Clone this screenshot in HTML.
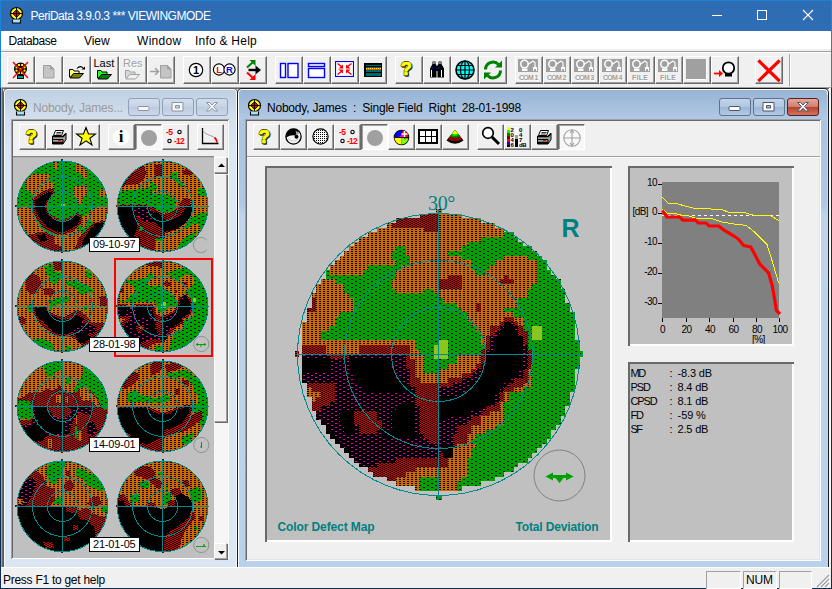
<!DOCTYPE html><html><head><meta charset="utf-8"><title>PeriData</title><style>
html,body{margin:0;padding:0}
body{width:832px;height:589px;position:relative;overflow:hidden;background:#f0f0f0;font-family:"Liberation Sans",sans-serif}
body>div,body>span,body>svg{position:absolute;display:block;white-space:pre}
.b{border:1px solid;border-color:#fff #696969 #696969 #fff;background:#f0f0f0;box-shadow:inset -1px -1px 0 #a0a0a0}
.sb{border:1px solid;border-color:#fff #a0a0a0 #a0a0a0 #fff;background:#f0f0f0;box-shadow:1px 1px 0 #696969}
.bp{border:1px solid;border-color:#696969 #fff #fff #696969;background:#f8f8f8;box-shadow:inset 1px 1px 0 #a0a0a0}
</style></head><body><div style="left:0px;top:0px;width:832px;height:31px;background:#2e6db3;"></div>
<div style="left:0px;top:0px;width:832px;height:1px;background:#1c82d4;"></div>
<div style="left:0px;top:0px;width:1px;height:88px;background:#1c82d4;"></div>
<div style="left:831px;top:0px;width:1px;height:88px;background:#1c82d4;"></div>
<div style="left:0px;top:88px;width:1px;height:501px;background:#0c2d55;"></div>
<div style="left:831px;top:88px;width:1px;height:501px;background:#0c2d55;"></div>
<span style="left:30.5px;top:7.5px;font:normal 12px 'Liberation Sans',sans-serif;line-height:16px;color:#fff;letter-spacing:-0.481px;">PeriData 3.9.0.3 *** VIEWINGMODE</span>
<div style="left:712px;top:15px;width:10px;height:1px;background:#fff;"></div>
<div style="left:757px;top:10px;width:8px;height:8px;border:1px solid #fff"></div>
<svg style="left:802px;top:9px" width="12" height="12" viewBox="0 0 12 12"><path d="M1 1L11 11M11 1L1 11" stroke="#fff" stroke-width="1.1" fill="none"/></svg>
<div style="left:1px;top:31px;width:830px;height:18px;background:#fff;"></div>
<div style="left:1px;top:49px;width:830px;height:2px;background:#f0f0f0;"></div>
<div style="left:1px;top:51px;width:830px;height:1px;background:#a0a0a0;"></div>
<div style="left:1px;top:52px;width:830px;height:1px;background:#fff;"></div>
<span style="left:8.5px;top:33px;font:normal 12px 'Liberation Sans',sans-serif;line-height:16px;color:#000;letter-spacing:-0.422px;">Database</span>
<span style="left:84px;top:33px;font:normal 12px 'Liberation Sans',sans-serif;line-height:16px;color:#000;letter-spacing:-0.074px;">View</span>
<span style="left:137px;top:33px;font:normal 12px 'Liberation Sans',sans-serif;line-height:16px;color:#000;letter-spacing:0.302px;">Window</span>
<span style="left:195px;top:33px;font:normal 12px 'Liberation Sans',sans-serif;line-height:16px;color:#000;letter-spacing:0.239px;">Info &amp; Help</span>
<div style="left:1px;top:53px;width:830px;height:35px;background:#f0f0f0;"></div>
<div class="b" style="left:7px;top:56px;width:26px;height:26px"></div>
<div class="b" style="left:35px;top:56px;width:26px;height:26px"></div>
<div class="b" style="left:63px;top:56px;width:26px;height:26px"></div>
<div class="b" style="left:91px;top:56px;width:26px;height:26px"></div>
<div class="b" style="left:119px;top:56px;width:26px;height:26px"></div>
<div class="b" style="left:147px;top:56px;width:26px;height:26px"></div>
<div class="b" style="left:183px;top:56px;width:26px;height:26px"></div>
<div class="b" style="left:211px;top:56px;width:26px;height:26px"></div>
<div class="b" style="left:239px;top:56px;width:26px;height:26px"></div>
<div class="b" style="left:275px;top:56px;width:26px;height:26px"></div>
<div class="b" style="left:303px;top:56px;width:26px;height:26px"></div>
<div class="b" style="left:331px;top:56px;width:26px;height:26px"></div>
<div class="b" style="left:359px;top:56px;width:26px;height:26px"></div>
<div class="b" style="left:395px;top:56px;width:26px;height:26px"></div>
<div class="b" style="left:423px;top:56px;width:26px;height:26px"></div>
<div class="b" style="left:451px;top:56px;width:26px;height:26px"></div>
<div class="b" style="left:479px;top:56px;width:26px;height:26px"></div>
<div class="b" style="left:515px;top:56px;width:26px;height:26px"></div>
<div class="b" style="left:543px;top:56px;width:26px;height:26px"></div>
<div class="b" style="left:571px;top:56px;width:26px;height:26px"></div>
<div class="b" style="left:599px;top:56px;width:26px;height:26px"></div>
<div class="b" style="left:627px;top:56px;width:26px;height:26px"></div>
<div class="b" style="left:655px;top:56px;width:26px;height:26px"></div>
<div class="b" style="left:683px;top:56px;width:26px;height:26px"></div>
<div class="b" style="left:711px;top:56px;width:26px;height:26px"></div>
<div class="b" style="left:755px;top:56px;width:26px;height:26px"></div>
<div style="left:789px;top:54px;width:1px;height:32px;background:#a0a0a0;"></div>
<div style="left:790px;top:54px;width:1px;height:32px;background:#fff;"></div>
<div style="left:1px;top:87px;width:830px;height:1px;background:#a0a0a0;"></div>
<div style="left:1px;top:88px;width:830px;height:1px;background:#696969;"></div>
<div style="left:1px;top:89px;width:830px;height:479px;background:#f0f0f0;"></div>
<div style="left:1px;top:88px;width:1px;height:480px;background:#a0a0a0;"></div>
<div style="left:2px;top:88px;width:1px;height:480px;background:#696969;"></div>
<div style="left:829px;top:88px;width:2px;height:480px;background:#f8f8f8;"></div>
<div style="left:3px;top:88px;width:235px;height:480px;background:#5a5a5a;border-radius:5px 5px 0 0"></div>
<div style="left:4px;top:89px;width:233px;height:479px;background:#f4f8fc;border-radius:4px 4px 0 0"></div>
<div style="left:5px;top:90px;width:231px;height:478px;background:linear-gradient(#c0d0e3 0px,#d2dfee 30px,#dae6f4 60px,#dae6f4 100%);border-radius:3px 3px 0 0"></div>
<div style="left:237px;top:88px;width:592px;height:480px;background:#1a1a1a;border-radius:5px 5px 0 0"></div>
<div style="left:238px;top:89px;width:590px;height:479px;background:#fff;border-radius:4px 4px 0 0"></div>
<div style="left:239px;top:90px;width:588px;height:478px;background:linear-gradient(#98b4d4 0px,#b1c9e5 30px,#a9c3e0 31px,#afc8e4 115px,#bdd4ec 125px,#b9d1ea 100%);border-radius:3px 3px 0 0"></div>
<div style="left:827px;top:95px;width:1px;height:473px;background:#a0e8f8;"></div>
<span style="left:33px;top:100px;font:normal 12px 'Liberation Sans',sans-serif;line-height:16px;color:#9a9a9a;letter-spacing:-0.155px;">Nobody, James...</span>
<span style="left:267px;top:100px;font:normal 12px 'Liberation Sans',sans-serif;line-height:16px;color:#000;letter-spacing:-0.216px;">Nobody, James  :  Single Field  Right  28-01-1998</span>
<div style="left:128px;top:98px;width:30px;height:16px;border:1px solid #8f9fbc;border-radius:3px;background:linear-gradient(#d3deec,#c6d3e4 50%,#bccbdf 50%,#cbd8e8)"></div>
<div style="left:162px;top:98px;width:30px;height:16px;border:1px solid #8f9fbc;border-radius:3px;background:linear-gradient(#d3deec,#c6d3e4 50%,#bccbdf 50%,#cbd8e8)"></div>
<div style="left:196px;top:98px;width:30px;height:16px;border:1px solid #8f9fbc;border-radius:3px;background:linear-gradient(#d3deec,#c6d3e4 50%,#bccbdf 50%,#cbd8e8)"></div>
<div style="left:719px;top:98px;width:30px;height:16px;border:1px solid #5f7290;border-radius:3px;background:linear-gradient(#c4d5ea,#b0c6e0 50%,#9bb6d6 50%,#b3cae4)"></div>
<div style="left:753px;top:98px;width:30px;height:16px;border:1px solid #5f7290;border-radius:3px;background:linear-gradient(#c4d5ea,#b0c6e0 50%,#9bb6d6 50%,#b3cae4)"></div>
<div style="left:787px;top:98px;width:30px;height:16px;border:1px solid #5a1f1c;border-radius:3px;background:linear-gradient(#e3a79b,#d07d6f 50%,#b9402c 50%,#d0735f)"></div>
<svg style="left:137px;top:105px" width="13" height="7" viewBox="0 0 13 7"><rect x="1" y="1.500" width="11" height="4" rx="1" fill="#f4f6fa" stroke="#8a94a6" stroke-width="1"/></svg>
<svg style="left:171px;top:101px" width="13" height="11" viewBox="0 0 13 11"><path fill-rule="evenodd" d="M1 1.500h11v8.500h-11zM4.500 4.500v2.500h4v-2.500z" fill="#f4f6fa" stroke="#8a94a6" stroke-width="1"/></svg>
<svg style="left:205px;top:101px" width="14" height="11" viewBox="0 0 14 11"><path d="M1.500 1.500h3l2.500 2.500 2.500-2.500h3l-4 4 4 4.500h-3l-2.500-2.800-2.500 2.800h-3l4-4.500z" fill="#f4f6fa" stroke="#8a94a6" stroke-width="1" stroke-linejoin="round"/></svg>
<svg style="left:728px;top:105px" width="13" height="7" viewBox="0 0 13 7"><rect x="1" y="1.500" width="11" height="4" rx="1" fill="#ffffff" stroke="#4a5568" stroke-width="1"/></svg>
<svg style="left:762px;top:101px" width="13" height="11" viewBox="0 0 13 11"><path fill-rule="evenodd" d="M1 1.500h11v8.500h-11zM4.500 4.500v2.500h4v-2.500z" fill="#ffffff" stroke="#4a5568" stroke-width="1"/></svg>
<svg style="left:796px;top:101px" width="14" height="11" viewBox="0 0 14 11"><path d="M1.500 1.500h3l2.500 2.500 2.500-2.500h3l-4 4 4 4.500h-3l-2.500-2.800-2.500 2.800h-3l4-4.500z" fill="#ffffff" stroke="#4a5568" stroke-width="1" stroke-linejoin="round"/></svg>
<div style="left:11px;top:119px;width:218px;height:440px;background:#a0a0a0;"></div>
<div style="left:12px;top:120px;width:217px;height:439px;background:#fff;"></div>
<div style="left:12px;top:120px;width:216px;height:438px;background:#696969;"></div>
<div style="left:13px;top:121px;width:215px;height:437px;background:#e3e3e3;"></div>
<div style="left:13px;top:121px;width:214px;height:436px;background:#f0f0f0;"></div>
<div style="left:245px;top:119px;width:576px;height:442px;background:#a0a0a0;"></div>
<div style="left:246px;top:120px;width:575px;height:441px;background:#fff;"></div>
<div style="left:246px;top:120px;width:574px;height:440px;background:#696969;"></div>
<div style="left:247px;top:121px;width:573px;height:439px;background:#e3e3e3;"></div>
<div style="left:247px;top:121px;width:572px;height:438px;background:#f0f0f0;"></div>
<div class="b" style="left:19px;top:124px;width:25px;height:24px"></div>
<div class="b" style="left:46px;top:124px;width:25px;height:24px"></div>
<div class="b" style="left:73px;top:124px;width:25px;height:24px"></div>
<div class="b" style="left:108px;top:124px;width:25px;height:24px"></div>
<div class="b" style="left:162px;top:124px;width:25px;height:24px"></div>
<div class="b" style="left:197px;top:124px;width:25px;height:24px"></div>
<div class="bp" style="left:135px;top:124px;width:25px;height:24px"></div>
<div class="b" style="left:253px;top:124px;width:25px;height:24px"></div>
<div class="b" style="left:280px;top:124px;width:25px;height:24px"></div>
<div class="b" style="left:307px;top:124px;width:25px;height:24px"></div>
<div class="b" style="left:334px;top:124px;width:25px;height:24px"></div>
<div class="b" style="left:388px;top:124px;width:25px;height:24px"></div>
<div class="b" style="left:415px;top:124px;width:25px;height:24px"></div>
<div class="b" style="left:442px;top:124px;width:25px;height:24px"></div>
<div class="b" style="left:477px;top:124px;width:25px;height:24px"></div>
<div class="b" style="left:504px;top:124px;width:25px;height:24px"></div>
<div class="b" style="left:531px;top:124px;width:25px;height:24px"></div>
<div class="bp" style="left:361px;top:124px;width:25px;height:24px"></div>
<div class="bp" style="left:558px;top:124px;width:25px;height:24px"></div>
<div style="left:247px;top:156px;width:573px;height:1px;background:#a0a0a0;"></div>
<div style="left:247px;top:157px;width:573px;height:1px;background:#fff;"></div>
<div style="left:13px;top:156px;width:201px;height:402px;background:#c0c0c0;"></div>
<div style="left:13px;top:156px;width:201px;height:1px;background:#868686;"></div>
<div style="left:13px;top:157px;width:201px;height:1px;background:#b0b0b0;"></div>
<div style="left:214px;top:156px;width:14px;height:402px;background:#f0f0f0;"></div>
<div style="left:265px;top:166px;width:347px;height:376px;background:#696969;"></div>
<div style="left:267px;top:168px;width:345px;height:374px;background:#fff;"></div>
<div style="left:267px;top:168px;width:343px;height:372px;background:#c0c0c0;"></div>
<div style="left:628px;top:166px;width:166px;height:180px;background:#696969;"></div>
<div style="left:630px;top:168px;width:164px;height:178px;background:#fff;"></div>
<div style="left:630px;top:168px;width:162px;height:176px;background:#c0c0c0;"></div>
<div style="left:628px;top:362px;width:166px;height:180px;background:#696969;"></div>
<div style="left:630px;top:364px;width:164px;height:178px;background:#fff;"></div>
<div style="left:630px;top:364px;width:162px;height:176px;background:#c0c0c0;"></div>
<div style="left:1px;top:568px;width:830px;height:20px;background:#f0f0f0;"></div>
<div style="left:1px;top:567px;width:830px;height:1px;background:#fff;"></div>
<div style="left:0px;top:588px;width:832px;height:1px;background:#0c2d55;"></div>
<span style="left:3px;top:571.5px;font:normal 12px 'Liberation Sans',sans-serif;line-height:16px;color:#000;letter-spacing:-0.270px;">Press F1 to get help</span>
<div style="left:706px;top:571px;width:33px;height:16px;border:1px solid;border-color:#a0a0a0 #fff #fff #a0a0a0"></div>
<div style="left:743px;top:571px;width:32px;height:16px;border:1px solid;border-color:#a0a0a0 #fff #fff #a0a0a0"></div>
<div style="left:779px;top:571px;width:31px;height:16px;border:1px solid;border-color:#a0a0a0 #fff #fff #a0a0a0"></div>
<svg style="left:815px;top:573px" width="15" height="15" viewBox="0 0 15 15"><path d="M14 2L2 14M14 6L6 14M14 10L10 14" stroke="#a0a0a0" stroke-width="1.300"/><path d="M15 3L3 15M15 7L7 15M15 11L11 15" stroke="#fff" stroke-width="1"/></svg>
<span style="left:746px;top:571.5px;font:normal 12px 'Liberation Sans',sans-serif;line-height:16px;color:#000;letter-spacing:-0.109px;">NUM</span>
<svg width="0" height="0" style="position:absolute"><defs>
<pattern id="pg" width="8" height="4" patternUnits="userSpaceOnUse"><rect width="8" height="4" fill="#00a000"/><rect x="1" y="0" width="2" height="1" fill="#000"/><rect x="5" y="2" width="2" height="1" fill="#000"/></pattern>
<pattern id="po" width="4" height="2" patternUnits="userSpaceOnUse"><rect width="4" height="2" fill="#d06800"/><rect x="1" y="0" width="2" height="1" fill="#000"/></pattern>
<pattern id="pr" width="4" height="2" patternUnits="userSpaceOnUse"><rect width="4" height="2" fill="#000"/><rect x="1" y="1" width="2" height="1" fill="#e00000"/><rect x="3" y="0" width="1" height="1" fill="#e00000"/><rect x="0" y="0" width="1" height="1" fill="#e00000"/></pattern>
<pattern id="pm" width="8" height="4" patternUnits="userSpaceOnUse"><rect width="8" height="4" fill="#000"/><rect x="1" y="0" width="2" height="1" fill="#e000a8"/><rect x="5" y="2" width="2" height="1" fill="#e000a8"/></pattern>
<pattern id="pl" width="8" height="4" patternUnits="userSpaceOnUse"><rect width="8" height="4" fill="#8cc420"/></pattern>
</defs></svg>
<svg style="left:290px;top:205px" width="300" height="296" viewBox="0 0 300 296" shape-rendering="crispEdges"><path d="M148 9h24v4h-24zM148 13h43v5h-43zM97 18h5v5h-5zM148 18h57v5h-57zM87 23h47v4h-47zM148 23h66v4h-66zM78 27h136v5h-136zM69 32h122v5h-122zM64 37h113v4h-113zM59 41h47v5h-47zM116 41h56v5h-56zM54 46h48v5h-48zM116 46h42v5h-42zM50 51h52v4h-52zM120 51h52v4h-52zM214 51h24v4h-24zM45 55h61v5h-61zM120 55h61v5h-61zM205 55h42v5h-42zM40 60h38v5h-38zM111 60h70v5h-70zM200 60h47v5h-47zM40 65h33v5h-33zM106 65h80v5h-80zM196 65h51v5h-51zM106 70h52v4h-52zM172 70h42v4h-42zM219 70h28v4h-28zM31 74h14v5h-14zM102 74h46v5h-46zM172 74h38v5h-38zM224 74h23v5h-23zM26 79h28v5h-28zM102 79h46v5h-46zM172 79h70v5h-70zM26 84h28v4h-28zM106 84h28v4h-28zM144 84h94v4h-94zM22 88h37v5h-37zM148 88h90v5h-90zM26 93h38v5h-38zM153 93h75v5h-75zM26 98h38v5h-38zM167 98h19v5h-19zM191 98h37v5h-37zM26 103h38v4h-38zM172 103h14v4h-14zM191 103h23v4h-23zM17 107h33v5h-33zM177 107h47v5h-47zM17 112h28v5h-28zM177 112h37v5h-37zM224 112h9v5h-9zM12 117h33v4h-33zM181 117h29v4h-29zM228 117h5v4h-5zM12 121h28v5h-28zM186 121h14v5h-14zM12 126h19v5h-19zM191 126h9v5h-9zM12 131h19v4h-19zM191 131h5v4h-5zM12 135h113v5h-113zM191 135h5v5h-5zM36 140h33v5h-33zM120 140h5v5h-5zM36 145h33v4h-33zM120 145h10v4h-10zM120 149h14v5h-14zM167 149h24v5h-24zM125 154h9v5h-9zM167 154h24v5h-24zM125 159h9v5h-9zM158 159h28v5h-28zM125 164h9v4h-9zM148 164h33v4h-33zM238 164h4v4h-4zM125 168h47v5h-47zM238 168h4v5h-4zM130 173h28v5h-28zM238 173h4v5h-4zM233 178h9v4h-9zM17 182h5v5h-5zM224 182h9v5h-9zM17 187h14v5h-14zM214 187h5v5h-5zM22 192h4v5h-4zM214 192h5v5h-5zM210 197h4v4h-4zM210 201h4v5h-4zM200 206h14v5h-14zM191 211h23v4h-23zM191 215h23v5h-23zM181 220h24v5h-24zM181 225h15v4h-15zM177 229h9v5h-9zM177 234h4v5h-4zM167 239h19v4h-19zM163 243h18v5h-18zM163 248h18v5h-18zM158 253h19v5h-19zM158 258h19v4h-19zM125 262h52v5h-52zM116 267h61v5h-61zM106 272h24v4h-24zM148 272h24v4h-24zM106 276h24v5h-24zM148 276h19v5h-19zM125 281h5v5h-5zM148 281h19v5h-19z" fill="url(#po)"/><path d="M214 27h10v5h-10zM191 32h37v5h-37zM177 37h56v4h-56zM106 41h10v5h-10zM172 41h70v5h-70zM102 46h14v5h-14zM158 46h89v5h-89zM102 51h18v4h-18zM172 51h42v4h-42zM238 51h14v4h-14zM106 55h14v5h-14zM181 55h24v5h-24zM247 55h10v5h-10zM78 60h33v5h-33zM181 60h19v5h-19zM247 60h10v5h-10zM36 65h4v5h-4zM73 65h33v5h-33zM186 65h10v5h-10zM247 65h14v5h-14zM36 70h70v4h-70zM247 70h19v4h-19zM45 74h57v5h-57zM247 74h24v5h-24zM54 79h48v5h-48zM242 79h29v5h-29zM54 84h52v4h-52zM134 84h10v4h-10zM238 84h37v4h-37zM59 88h89v5h-89zM238 88h37v5h-37zM64 93h89v5h-89zM228 93h47v5h-47zM64 98h103v5h-103zM228 98h52v5h-52zM64 103h108v4h-108zM214 103h66v4h-66zM50 107h127v5h-127zM224 107h61v5h-61zM45 112h132v5h-132zM233 112h52v5h-52zM45 117h136v4h-136zM233 117h52v4h-52zM40 121h146v5h-146zM233 121h9v5h-9zM252 121h33v5h-33zM31 126h160v5h-160zM238 126h4v5h-4zM252 126h33v5h-33zM31 131h160v4h-160zM238 131h4v4h-4zM252 131h33v4h-33zM125 135h23v5h-23zM158 135h33v5h-33zM238 135h52v5h-52zM125 140h19v5h-19zM158 140h38v5h-38zM238 140h52v5h-52zM130 145h14v4h-14zM158 145h33v4h-33zM242 145h48v4h-48zM134 149h10v5h-10zM158 149h9v5h-9zM242 149h48v5h-48zM134 154h33v5h-33zM242 154h48v5h-48zM134 159h24v5h-24zM242 159h48v5h-48zM134 164h14v4h-14zM242 164h43v4h-43zM242 168h43v5h-43zM242 173h43v5h-43zM242 178h43v4h-43zM233 182h52v5h-52zM219 187h61v5h-61zM219 192h61v5h-61zM214 197h66v4h-66zM214 201h61v5h-61zM214 206h61v5h-61zM214 211h57v4h-57zM214 215h57v5h-57zM205 220h61v5h-61zM196 225h65v4h-65zM186 229h75v5h-75zM181 234h76v5h-76zM186 239h66v4h-66zM181 243h66v5h-66zM181 248h61v5h-61zM177 253h61v5h-61zM177 258h51v4h-51zM177 262h47v5h-47zM177 267h37v5h-37zM130 272h18v4h-18zM172 272h33v4h-33zM130 276h18v5h-18zM167 276h24v5h-24zM130 281h18v5h-18zM167 281h5v5h-5z" fill="url(#pg)"/><path d="M130 9h18v4h-18zM106 13h42v5h-42zM102 18h46v5h-46zM134 23h14v4h-14zM158 70h14v4h-14zM214 70h5v4h-5zM148 74h24v5h-24zM210 74h14v5h-14zM148 79h24v5h-24zM22 93h4v5h-4zM22 98h4v5h-4zM186 98h5v5h-5zM17 103h9v4h-9zM186 103h5v4h-5zM214 112h10v5h-10zM210 117h4v4h-4zM224 117h4v4h-4zM200 121h10v5h-10zM228 121h5v5h-5zM200 126h5v5h-5zM228 126h10v5h-10zM196 131h4v4h-4zM233 131h5v4h-5zM196 135h4v5h-4zM233 135h5v5h-5zM12 140h24v5h-24zM69 140h51v5h-51zM196 140h4v5h-4zM12 145h24v4h-24zM69 145h51v4h-51zM191 145h5v4h-5zM238 145h4v4h-4zM40 149h19v5h-19zM116 149h4v5h-4zM191 149h5v5h-5zM238 149h4v5h-4zM116 154h9v5h-9zM191 154h5v5h-5zM238 154h4v5h-4zM116 159h9v5h-9zM186 159h5v5h-5zM238 159h4v5h-4zM120 164h5v4h-5zM181 164h5v4h-5zM233 164h5v4h-5zM120 168h5v5h-5zM172 168h9v5h-9zM233 168h5v5h-5zM120 173h10v5h-10zM158 173h14v5h-14zM224 173h14v5h-14zM17 178h28v4h-28zM120 178h43v4h-43zM219 178h14v4h-14zM22 182h23v5h-23zM125 182h23v5h-23zM214 182h10v5h-10zM31 187h14v5h-14zM125 187h23v5h-23zM210 187h4v5h-4zM26 192h19v5h-19zM125 192h23v5h-23zM210 192h4v5h-4zM22 197h18v4h-18zM125 197h23v4h-23zM205 197h5v4h-5zM22 201h9v5h-9zM130 201h18v5h-18zM196 201h14v5h-14zM64 206h23v5h-23zM130 206h18v5h-18zM191 206h9v5h-9zM64 211h23v4h-23zM130 211h18v4h-18zM181 211h10v4h-10zM64 215h28v5h-28zM130 215h18v5h-18zM177 215h14v5h-14zM69 220h23v5h-23zM130 220h18v5h-18zM167 220h14v5h-14zM69 225h18v4h-18zM130 225h18v4h-18zM167 225h14v4h-14zM134 229h14v5h-14zM163 229h14v5h-14zM139 234h9v5h-9zM163 234h14v5h-14zM163 239h4v4h-4zM148 248h5v5h-5zM106 253h52v5h-52zM87 258h71v4h-71zM78 262h47v5h-47zM83 267h33v5h-33zM97 272h9v4h-9z" fill="url(#pr)"/><path d="M219 117h5v4h-5zM210 121h4v5h-4zM224 121h4v5h-4zM205 126h5v5h-5zM200 131h5v4h-5zM200 135h5v5h-5zM200 140h5v5h-5zM233 140h5v5h-5zM196 145h4v4h-4zM233 145h5v4h-5zM12 149h28v5h-28zM59 149h57v5h-57zM233 149h5v5h-5zM40 154h19v5h-19zM102 154h14v5h-14zM233 154h5v5h-5zM40 159h19v5h-19zM102 159h14v5h-14zM191 159h5v5h-5zM233 159h5v5h-5zM40 164h19v4h-19zM106 164h14v4h-14zM186 164h5v4h-5zM228 164h5v4h-5zM12 168h52v5h-52zM106 168h14v5h-14zM181 168h10v5h-10zM228 168h5v5h-5zM12 173h52v5h-52zM111 173h9v5h-9zM172 173h14v5h-14zM219 173h5v5h-5zM45 178h24v4h-24zM116 178h4v4h-4zM163 178h18v4h-18zM214 178h5v4h-5zM45 182h28v5h-28zM120 182h5v5h-5zM148 182h29v5h-29zM210 182h4v5h-4zM45 187h80v5h-80zM148 187h19v5h-19zM205 187h5v5h-5zM45 192h80v5h-80zM205 192h5v5h-5zM40 197h71v4h-71zM200 197h5v4h-5zM31 201h75v5h-75zM125 201h5v5h-5zM191 201h5v5h-5zM26 206h24v5h-24zM87 206h15v5h-15zM125 206h5v5h-5zM181 206h10v5h-10zM26 211h24v4h-24zM87 211h15v4h-15zM125 211h5v4h-5zM158 211h23v4h-23zM36 215h14v5h-14zM92 215h10v5h-10zM125 215h5v5h-5zM148 215h29v5h-29zM40 220h14v5h-14zM64 220h5v5h-5zM92 220h10v5h-10zM125 220h5v5h-5zM148 220h19v5h-19zM45 225h9v4h-9zM64 225h5v4h-5zM87 225h5v4h-5zM125 225h5v4h-5zM148 225h19v4h-19zM45 229h47v5h-47zM130 229h4v5h-4zM148 229h15v5h-15zM50 234h89v5h-89zM148 234h15v5h-15zM54 239h99v4h-99zM59 243h94v5h-94zM59 248h89v5h-89zM64 253h42v5h-42zM69 258h18v4h-18z" fill="url(#pm)"/><path d="M214 117h5v4h-5zM214 121h10v5h-10zM210 126h18v5h-18zM205 131h28v4h-28zM205 135h28v5h-28zM205 140h28v5h-28zM200 145h33v4h-33zM196 149h37v5h-37zM12 154h28v5h-28zM59 154h43v5h-43zM196 154h37v5h-37zM12 159h28v5h-28zM59 159h43v5h-43zM196 159h37v5h-37zM12 164h28v4h-28zM59 164h47v4h-47zM191 164h37v4h-37zM64 168h42v5h-42zM191 168h37v5h-37zM64 173h47v5h-47zM186 173h33v5h-33zM69 178h47v4h-47zM181 178h33v4h-33zM73 182h47v5h-47zM177 182h33v5h-33zM167 187h38v5h-38zM148 192h57v5h-57zM111 197h14v4h-14zM148 197h52v4h-52zM106 201h19v5h-19zM148 201h43v5h-43zM50 206h14v5h-14zM102 206h23v5h-23zM148 206h33v5h-33zM50 211h14v4h-14zM102 211h23v4h-23zM148 211h10v4h-10zM31 215h5v5h-5zM50 215h14v5h-14zM102 215h23v5h-23zM36 220h4v5h-4zM54 220h10v5h-10zM102 220h23v5h-23zM36 225h9v4h-9zM54 225h10v4h-10zM92 225h33v4h-33zM40 229h5v5h-5zM92 229h38v5h-38zM45 234h5v5h-5zM50 239h4v4h-4zM153 239h10v4h-10zM54 243h5v5h-5zM153 243h10v5h-10zM153 248h10v5h-10z" fill="#000"/><path d="M242 121h10v5h-10zM242 126h10v5h-10zM242 131h10v4h-10zM148 135h10v5h-10zM144 140h14v5h-14zM144 145h14v4h-14zM144 149h14v5h-14z" fill="url(#pl)"/><rect x="146" y="4" width="6" height="5" fill="url(#po)"/><rect x="5" y="146" width="4" height="6" fill="url(#pr)"/><rect x="289" y="146" width="4" height="6" fill="url(#pg)"/><rect x="146" y="290" width="6" height="5" fill="url(#pg)"/></svg><svg style="left:290px;top:205px" width="300" height="296" viewBox="0 0 300 296" fill="none" stroke="#008a8c" stroke-width="1" shape-rendering="crispEdges"><circle cx="148.5" cy="149.5" r="47"/><circle cx="148.5" cy="149.5" r="94"/><circle cx="148.5" cy="149.5" r="141"/><path d="M148.5 4.5V294.5M4.5 149.5H292.5" shape-rendering="crispEdges"/></svg>
<svg style="left:12px;top:156px" width="100" height="100" viewBox="0 0 100 100" shape-rendering="crispEdges"><clipPath id="tc1"><circle cx="50.4" cy="50.4" r="45.3"/></clipPath><g clip-path="url(#tc1)"><rect width="100" height="100" fill="url(#pg)"/><polygon points="12.7,25.5 20.4,17.8 36.5,17.8 37.4,25.5 41.6,27.2 41.6,34.0 34.0,34.8 25.5,40.7 21.2,39.9 17.0,34.0 12.7,35.7" fill="url(#po)"/><polygon points="5.1,52.6 12.7,50.9 20.4,52.6 22.1,57.7 27.2,67.9 34.0,76.4 30.6,79.8 22.1,81.5 17.0,79.8 10.2,71.3 6.8,64.5" fill="url(#po)"/><polygon points="40.7,3.4 45.0,3.4 45.0,12.7 40.7,12.7" fill="url(#po)"/><polygon points="63.7,3.4 71.3,7.6 71.3,12.7 74.7,13.6 74.7,22.1 71.3,22.1 67.9,17.0 63.7,16.1" fill="url(#po)"/><polygon points="62.8,30.6 74.7,28.9 75.6,39.0 71.3,40.7 69.6,47.5 65.4,48.4 64.5,42.4 61.1,39.0" fill="url(#po)"/><polygon points="88.3,33.1 92.5,34.0 92.5,40.7 88.3,40.7" fill="url(#po)"/><polygon points="79.8,51.8 96.8,50.9 95.9,62.8 88.3,67.9 81.5,67.1 77.2,62.8 74.7,64.5 74.7,71.3 71.3,73.0 67.9,67.9 69.6,61.1 76.4,58.6" fill="url(#po)"/><polygon points="50.9,74.7 67.9,73.0 71.3,79.8 67.9,88.3 62.8,95.9 50.9,96.8 40.7,95.9 34.0,88.3 37.4,81.5" fill="url(#po)"/><polygon points="21.2,42.4 27.2,39.0 34.0,34.8 40.7,33.1 40.7,39.0 36.5,42.4 34.0,49.2 35.7,56.0 40.7,61.1 49.2,65.4 57.7,62.8 64.5,57.7 69.6,61.1 67.9,67.9 61.1,74.7 50.9,78.1 40.7,76.4 32.3,71.3 25.5,62.8 21.2,52.6" fill="url(#pr)" stroke="url(#pr)" stroke-width="1.6"/><polygon points="17.0,79.8 30.6,76.4 40.7,79.8 42.4,88.3 49.2,91.7 49.2,97.6 34.0,95.1 23.8,88.3" fill="url(#pr)" stroke="url(#pr)" stroke-width="1.6"/><polygon points="67.9,81.5 74.7,74.7 81.5,67.9 88.3,66.2 95.9,66.2 91.7,74.7 83.2,83.2 74.7,91.7 67.9,95.1 62.8,95.9" fill="url(#pr)" stroke="url(#pr)" stroke-width="1.6"/><polygon points="23.8,44.1 34.0,38.2 39.0,36.5 38.2,40.7 34.0,44.1 32.3,50.9 34.0,57.7 39.9,63.7 49.2,67.1 57.7,64.5 63.7,59.4 67.1,62.0 65.4,67.1 59.4,72.2 50.9,75.6 41.6,73.9 34.0,68.8 28.0,61.1 23.8,52.6" fill="#000" stroke="#000" stroke-width="1.6"/><polygon points="25.5,79.8 32.3,78.9 34.0,83.2 28.9,84.9" fill="#000" stroke="#000" stroke-width="1.6"/><polygon points="73.0,81.5 79.8,73.0 84.9,67.9 91.7,67.9 88.3,74.7 79.8,83.2 74.7,88.3 70.5,88.3" fill="#000" stroke="#000" stroke-width="1.6"/><polygon points="49.2,47.5 52.6,47.5 52.6,50.1 49.2,50.1" fill="url(#pl)"/></g><rect x="49" y="3" width="2" height="2" fill="#402000"/><rect x="49" y="95" width="2" height="2" fill="#402000"/><rect x="3" y="49" width="2" height="2" fill="#402000"/></svg><svg style="left:12px;top:156px" width="100" height="100" viewBox="0 0 100 100" fill="none" stroke="#008a8c" stroke-width="1" shape-rendering="crispEdges"><circle cx="50.4" cy="50.4" r="15"/><circle cx="50.4" cy="50.4" r="30"/><circle cx="50.4" cy="50.4" r="45.3"/><path d="M50.5 4V96M4 50.5H96" shape-rendering="crispEdges"/></svg><svg style="left:113px;top:156px" width="100" height="100" viewBox="0 0 100 100" shape-rendering="crispEdges"><clipPath id="tc2"><circle cx="49.6" cy="50.4" r="45.3"/></clipPath><g clip-path="url(#tc2)"><rect width="100" height="100" fill="url(#po)"/><polygon points="3.4,36.5 17.0,34.0 30.6,33.1 36.5,30.6 36.5,25.5 39.9,25.5 40.7,28.9 44.1,29.7 43.3,34.0 36.5,36.5 42.4,38.2 49.2,38.2 56.0,39.0 62.8,44.1 62.8,52.6 57.7,56.0 50.9,56.9 44.1,54.3 40.7,50.9 34.0,49.2 3.4,49.2" fill="url(#pg)"/><polygon points="57.7,17.0 63.7,16.1 64.5,22.1 67.9,25.5 73.0,31.4 67.9,31.4 62.8,25.5 58.6,22.1" fill="url(#pg)"/><polygon points="84.9,32.3 95.9,33.1 96.8,40.7 84.9,39.9" fill="url(#pg)"/><polygon points="84.9,57.7 95.9,56.0 95.1,67.9 88.3,74.7 84.9,67.9 79.8,67.9 74.7,73.0 71.3,71.3 76.4,62.0 81.5,61.1" fill="url(#pg)"/><polygon points="74.7,79.8 84.9,74.7 79.8,84.9 71.3,91.7 64.5,92.5 67.9,84.9" fill="url(#pg)"/><polygon points="43.3,81.5 49.2,80.6 49.2,84.9 43.3,84.9" fill="url(#pg)"/><polygon points="9.3,23.8 20.4,14.4 30.6,11.0 32.3,17.0 30.6,22.1 25.5,27.2 17.0,28.0 10.2,28.9" fill="url(#pr)" stroke="url(#pr)" stroke-width="1.6"/><polygon points="41.6,10.2 48.4,8.5 49.2,18.7 42.4,18.7" fill="url(#pr)" stroke="url(#pr)" stroke-width="1.6"/><polygon points="69.6,15.3 74.7,13.6 79.8,17.0 76.4,18.7 70.5,17.8" fill="url(#pr)" stroke="url(#pr)" stroke-width="1.6"/><polygon points="1.7,50.1 34.0,50.1 40.7,51.8 44.1,56.0 50.9,58.6 58.6,56.9 64.5,52.6 67.9,47.5 71.3,42.4 76.4,44.1 76.4,50.9 75.6,59.4 67.9,62.8 66.2,69.6 57.7,74.7 50.9,76.4 50.9,81.5 40.7,81.5 40.7,95.9 30.6,91.7 17.0,83.2 6.8,71.3 1.7,57.7" fill="url(#pr)" stroke="url(#pr)" stroke-width="1.6"/><polygon points="16.1,50.9 34.0,50.9 40.7,57.7 49.2,62.8 50.9,65.4 40.7,66.2 30.6,64.5 23.8,59.4" fill="url(#pm)"/><polygon points="1.7,50.9 16.1,50.9 22.1,57.7 23.8,67.9 22.1,76.4 18.7,83.2 10.2,74.7 1.7,59.4" fill="#000" stroke="#000" stroke-width="1.6"/><polygon points="39.0,59.4 44.1,67.9 52.6,74.7 62.8,73.0 71.3,67.1 77.2,59.4 79.8,50.9 74.7,49.2 71.3,56.0 66.2,61.1 57.7,65.4 50.9,64.5 45.8,58.6 42.4,56.0" fill="#000" stroke="#000" stroke-width="1.6"/><polygon points="25.5,71.3 29.7,71.3 29.7,74.7 25.5,74.7" fill="url(#pg)"/></g><rect x="49" y="3" width="2" height="2" fill="#402000"/><rect x="49" y="95" width="2" height="2" fill="#402000"/><rect x="3" y="49" width="2" height="2" fill="#402000"/></svg><svg style="left:113px;top:156px" width="100" height="100" viewBox="0 0 100 100" fill="none" stroke="#008a8c" stroke-width="1" shape-rendering="crispEdges"><circle cx="49.6" cy="50.4" r="15"/><circle cx="49.6" cy="50.4" r="30"/><circle cx="49.6" cy="50.4" r="45.3"/><path d="M49.5 4V96M4 50.5H96" shape-rendering="crispEdges"/></svg><svg style="left:12px;top:256px" width="100" height="100" viewBox="0 0 100 100" shape-rendering="crispEdges"><clipPath id="tc3"><circle cx="50.4" cy="50.4" r="45.3"/></clipPath><g clip-path="url(#tc3)"><rect width="100" height="100" fill="url(#po)"/><polygon points="32.3,10.2 40.7,8.5 41.6,15.3 49.2,17.0 50.9,22.1 45.8,24.6 44.1,28.0 38.2,27.2 36.5,20.4 33.1,17.0" fill="url(#pg)"/><polygon points="54.3,25.5 62.8,24.6 67.9,27.2 74.7,28.9 81.5,34.0 81.5,37.4 74.7,36.5 73.0,38.2 66.2,37.4 63.7,32.3 57.7,30.6 54.3,28.9" fill="url(#pg)"/><polygon points="73.0,13.6 79.8,17.0 79.8,22.9 74.7,22.1" fill="url(#pg)"/><polygon points="36.5,45.8 44.1,42.4 49.2,40.7 57.7,40.7 58.6,45.0 50.9,46.7 45.8,49.2 40.7,50.1 39.9,54.3 36.5,54.3" fill="url(#pg)"/><polygon points="14.4,49.2 20.4,47.5 21.2,56.0 17.0,56.0" fill="url(#pg)"/><polygon points="22.1,83.2 34.0,83.2 41.6,88.3 41.6,95.1 32.3,94.2 23.8,89.1" fill="url(#pg)"/><polygon points="52.6,90.0 58.6,90.0 58.6,95.1 52.6,95.1" fill="url(#pg)"/><polygon points="72.2,50.9 74.7,50.9 74.7,55.2 72.2,55.2" fill="url(#pg)"/><polygon points="15.3,22.1 20.4,17.8 27.2,22.1 28.9,29.7 23.8,36.5 18.7,37.4 14.4,32.3" fill="url(#pr)" stroke="url(#pr)" stroke-width="1.6"/><polygon points="32.3,34.0 39.0,32.3 42.4,35.7 39.0,39.0 33.1,38.2" fill="url(#pr)" stroke="url(#pr)" stroke-width="1.6"/><polygon points="40.7,3.4 49.2,3.4 49.2,13.6 43.3,12.7" fill="url(#pr)" stroke="url(#pr)" stroke-width="1.6"/><polygon points="88.3,41.6 96.8,40.7 96.8,49.2 89.1,49.2" fill="url(#pr)" stroke="url(#pr)" stroke-width="1.6"/><polygon points="6.8,61.1 13.6,62.8 11.9,67.1 7.6,66.2" fill="url(#pr)" stroke="url(#pr)" stroke-width="1.6"/><polygon points="21.2,50.9 34.0,50.9 36.5,56.0 42.4,59.4 50.9,62.0 57.7,59.4 62.8,56.0 67.9,56.0 74.7,61.1 79.8,67.9 95.1,67.9 90.0,76.4 81.5,84.9 74.7,91.7 67.9,86.6 62.8,81.5 57.7,79.8 50.9,79.8 42.4,78.1 35.7,73.0 28.9,67.9 23.8,59.4" fill="url(#pr)" stroke="url(#pr)" stroke-width="1.6"/><polygon points="57.7,67.9 67.9,64.5 74.7,67.9 84.9,71.3 81.5,78.1 74.7,76.4 64.5,79.8 59.4,74.7" fill="url(#pm)"/><polygon points="23.8,52.6 33.1,51.8 35.7,57.7 42.4,62.0 50.9,65.4 58.6,62.8 64.5,59.4 71.3,62.8 67.9,67.9 61.1,74.7 50.9,78.1 42.4,75.6 36.5,69.6 30.6,64.5 25.5,59.4" fill="#000" stroke="#000" stroke-width="1.6"/><polygon points="64.5,79.8 74.7,76.4 76.4,83.2 71.3,86.6 66.2,84.9" fill="#000" stroke="#000" stroke-width="1.6"/></g><rect x="49" y="3" width="2" height="2" fill="#402000"/><rect x="49" y="95" width="2" height="2" fill="#402000"/><rect x="3" y="49" width="2" height="2" fill="#402000"/></svg><svg style="left:12px;top:256px" width="100" height="100" viewBox="0 0 100 100" fill="none" stroke="#008a8c" stroke-width="1" shape-rendering="crispEdges"><circle cx="50.4" cy="50.4" r="15"/><circle cx="50.4" cy="50.4" r="30"/><circle cx="50.4" cy="50.4" r="45.3"/><path d="M50.5 4V96M4 50.5H96" shape-rendering="crispEdges"/></svg><svg style="left:113px;top:256px" width="100" height="100" viewBox="0 0 100 100" shape-rendering="crispEdges"><clipPath id="tc4"><circle cx="49.6" cy="50.4" r="45.3"/></clipPath><g clip-path="url(#tc4)"><rect width="100" height="100" fill="url(#po)"/><polygon points="12.8,25.5 14.4,23.8 16.0,24.3 25.8,24.3 26.6,22.6 35.1,22.4 35.5,20.6 33.9,18.8 33.9,18.0 35.5,17.8 35.7,16.5 38.4,16.5 38.5,17.8 39.8,18.2 40.0,21.8 38.0,22.4 35.5,23.8 35.5,25.9 34.1,26.4 34.1,28.7 35.5,29.1 35.7,30.2 44.5,30.2 44.6,28.7 45.7,28.7 46.1,29.9 47.7,30.2 48.9,31.3 50.1,31.6 51.7,33.2 53.3,33.4 53.5,34.4 55.8,34.6 56.2,35.6 57.8,36.0 58.2,37.3 59.4,39.3 60.6,40.9 62.3,43.4 63.5,45.4 64.3,49.0 63.9,50.2 55.4,50.4 55.4,53.0 51.7,54.7 50.1,55.1 50.1,56.3 44.9,56.3 44.5,50.6 43.2,49.0 43.0,48.3 41.8,48.0 41.5,46.3 5.6,46.3 5.6,45.2 11.4,45.2 11.7,43.7 14.2,43.6 14.5,42.2 17.2,40.6 17.2,39.4 17.6,37.7 22.1,37.3 21.9,32.9 20.5,32.6 20.2,28.7 17.5,28.6 17.2,27.1 12.8,26.9 7.1,26.9 7.1,25.5" fill="url(#pg)"/><polygon points="53.3,16.9 57.8,16.5 58.2,14.9 62.3,14.7 62.7,13.4 70.8,13.3 71.2,11.7 73.2,9.2 82.6,9.2 84.2,20.6 80.6,20.6 78.9,20.8 78.5,19.4 71.2,19.4 70.8,20.6 68.0,21.0 67.6,22.4 66.3,22.6 65.9,23.8 64.3,24.3 63.9,25.3 62.3,25.3 61.9,23.8 60.6,22.6 60.2,21.0 57.8,20.6 57.4,19.1 53.3,19.0" fill="url(#pg)"/><polygon points="80.6,20.2 107.0,20.2 107.0,49.0 107.0,49.0 107.0,105.9 50.1,105.9 55.9,98.7 55.9,93.8 56.2,90.3 57.3,90.1 57.5,89.3 58.6,89.0 58.9,83.6 60.2,83.4 60.5,78.5 62.1,78.3 62.1,74.5 60.5,83.1 60.6,78.2 62.1,77.0 62.3,75.4 66.3,75.0 66.7,73.8 69.6,73.3 71.2,72.5 71.4,64.4 71.6,62.9 76.9,62.8 77.3,61.6 80.1,61.2 80.1,49.0 78.5,49.0 78.1,43.4 76.5,41.7 76.1,39.3 74.5,37.7 69.6,37.3 69.6,36.2 71.6,36.0 72.0,35.2 74.5,35.1 74.5,33.6 76.1,32.0 78.1,31.6 78.5,29.5 80.6,27.9 80.6,20.6" fill="url(#pg)"/><polygon points="43.3,89.8 49.8,89.8 49.8,94.9 43.3,94.9" fill="url(#pg)"/><polygon points="-1.5,48.0 12.9,48.0 12.9,50.3 23.4,50.3 23.4,48.0 40.0,48.0 40.0,51.1 41.5,51.4 42.0,56.7 44.1,59.1 46.1,60.3 47.7,59.9 50.1,59.5 55.0,57.9 59.0,56.3 62.3,53.8 63.5,49.8 64.5,49.0 65.1,44.2 66.7,40.9 69.6,40.5 70.0,38.9 74.1,38.9 74.5,40.1 76.1,41.7 78.1,44.2 78.5,49.0 78.9,49.0 78.9,54.7 78.1,58.7 76.1,59.1 75.7,61.2 72.8,62.0 70.4,62.8 70.0,65.2 69.6,67.7 67.1,68.5 66.3,70.1 63.5,70.5 63.1,72.5 60.6,73.3 60.2,75.8 58.2,76.6 57.8,79.0 55.0,79.8 54.5,83.1 52.5,83.9 52.1,86.3 50.1,86.8 41.7,86.8 41.4,88.2 38.5,88.5 38.2,89.8 35.8,90.1 35.5,92.8 33.1,99.2 0.9,99.2" fill="url(#pr)"/><polygon points="-1.5,50.4 14.5,50.4 14.5,52.3 21.8,52.3 21.8,50.4 39.0,50.4 40.4,57.1 41.2,61.2 44.5,64.4 42.8,66.0 43.2,73.3 44.5,76.6 47.7,79.0 50.1,79.0 50.1,60.3 50.1,60.3 52.5,61.2 55.0,59.5 59.0,57.9 61.5,56.3 63.1,53.8 64.3,52.2 64.7,49.0 65.9,49.0 66.7,45.0 68.4,42.5 70.0,40.9 71.6,39.9 73.6,40.9 75.3,42.9 76.9,45.4 77.5,49.0 78.0,49.0 77.7,54.8 76.5,57.4 74.1,58.7 72.4,59.9 70.1,61.6 68.9,64.8 66.7,66.9 63.5,68.6 61.0,70.2 58.5,72.5 56.1,73.8 54.5,76.1 53.7,80.2 50.1,81.8 53.0,82.3 49.2,82.6 47.6,83.1 35.8,83.4 35.3,85.0 30.4,85.2 27.7,86.8 22.4,90.6 0.9,90.6" fill="url(#pm)"/><polygon points="5.9,51.4 14.4,51.4 14.4,56.7 5.9,57.1" fill="#000"/><polygon points="21.7,51.4 34.7,51.4 35.1,53.8 37.2,57.9 40.4,61.2 40.4,62.0 26.6,62.4 23.3,59.5 21.7,56.3" fill="#000"/><polygon points="10.3,71.7 13.2,72.1 20.5,80.3 21.7,85.5 18.9,85.5 10.3,74.2" fill="#000"/><polygon points="18.1,68.5 22.5,68.5 22.9,75.8 19.3,75.8" fill="#000"/><polygon points="37.2,66.0 42.0,66.0 42.4,75.8 43.8,78.0 40.1,78.0 32.3,77.7 32.3,74.5 34.7,74.2 34.3,70.1" fill="#000"/><polygon points="51.4,78.8 53.5,78.8 53.5,83.1 51.4,83.1" fill="#000"/><polygon points="67.0,49.0 67.8,45.4 69.6,42.9 71.6,40.3 74.1,42.1 75.8,44.8 77.1,49.0 77.1,49.0 76.7,54.0 75.1,56.7 72.6,58.5 70.2,60.5 68.1,63.3 66.0,65.8 62.7,67.8 58.4,69.9 55.0,70.3 50.1,70.9 50.1,64.6 54.0,63.8 57.9,61.8 61.1,59.1 63.4,56.0 65.0,52.1 65.5,49.0" fill="#000"/><polygon points="6.3,59.5 17.2,59.5 17.2,62.4 15.6,65.2 12.8,67.7 10.3,70.1 7.1,70.1 4.6,65.2 4.6,61.2" fill="url(#pr)"/><polygon points="23.3,68.5 30.7,68.5 31.1,74.2 28.2,76.6 25.8,76.6 23.3,73.3" fill="url(#pr)"/><polygon points="42.8,60.3 44.5,59.1 47.7,60.3 50.1,60.3 50.1,79.0 47.7,79.0 44.5,76.6 43.2,73.3 42.8,66.0" fill="url(#pr)"/><polygon points="44.9,74.5 49.2,74.5 49.2,75.8 44.9,75.8" fill="url(#pr)"/><polygon points="35.1,7.6 38.4,4.3 49.2,4.3 49.2,12.1 46.1,12.1 44.5,10.5 35.1,10.4" fill="url(#pr)"/><polygon points="5.5,33.6 8.7,32.8 11.3,32.9 11.3,36.9 7.5,37.3 5.5,36.9" fill="url(#pr)"/><polygon points="50.1,27.1 51.7,26.7 52.1,25.5 53.3,24.3 54.5,25.5 57.4,25.5 57.8,29.5 53.3,29.9 50.1,28.7" fill="url(#pr)"/><polygon points="69.6,27.1 71.0,26.7 71.4,25.5 72.4,25.5 72.8,26.7 74.3,26.9 74.3,28.6 69.6,28.6" fill="url(#pr)"/><polygon points="62.1,34.4 63.7,34.4 63.7,37.3 62.1,37.3" fill="url(#pr)"/><polygon points="5.5,61.6 9.5,61.6 9.5,62.8 12.4,62.9 12.4,64.4 9.9,64.6 9.5,65.6 6.3,65.6" fill="url(#po)"/><polygon points="26.4,70.3 27.6,70.3 27.6,73.2 26.4,73.2" fill="url(#po)"/><polygon points="49.0,46.4 53.3,46.4 53.3,52.0 47.5,52.0 47.5,48.0 49.0,48.0" fill="url(#pl)"/><polygon points="80.1,41.9 83.3,41.9 83.3,46.4 80.1,46.4" fill="url(#pl)"/></g><rect x="49" y="3" width="2" height="2" fill="#402000"/><rect x="49" y="95" width="2" height="2" fill="#402000"/><rect x="3" y="49" width="2" height="2" fill="#402000"/></svg><svg style="left:113px;top:256px" width="100" height="100" viewBox="0 0 100 100" fill="none" stroke="#008a8c" stroke-width="1" shape-rendering="crispEdges"><circle cx="49.6" cy="50.4" r="15"/><circle cx="49.6" cy="50.4" r="30"/><circle cx="49.6" cy="50.4" r="45.3"/><path d="M49.5 4V96M4 50.5H96" shape-rendering="crispEdges"/></svg><svg style="left:12px;top:356px" width="100" height="100" viewBox="0 0 100 100" shape-rendering="crispEdges"><clipPath id="tc5"><circle cx="50.4" cy="50.4" r="45.3"/></clipPath><g clip-path="url(#tc5)"><rect width="100" height="100" fill="url(#pr)"/><polygon points="3.4,34.0 12.7,23.8 20.4,15.3 30.6,8.5 40.7,3.4 63.7,3.4 71.3,8.5 71.3,17.0 67.9,23.8 68.8,32.3 62.8,33.1 61.1,36.5 56.0,37.4 50.9,34.0 47.5,28.9 45.8,32.3 40.7,34.0 34.0,33.1 30.6,35.7 23.8,36.5 17.0,36.5 10.2,41.6 3.4,42.4" fill="url(#po)"/><polygon points="67.9,32.3 74.7,30.6 79.8,37.4 84.9,42.4 88.3,50.9 84.9,50.9 79.8,45.8 74.7,44.1 69.6,45.8 67.9,39.0" fill="url(#po)"/><polygon points="3.4,52.6 20.4,52.6 21.2,61.1 17.0,64.5 8.5,63.7" fill="url(#po)"/><polygon points="44.1,39.0 49.2,39.0 49.2,46.7 44.1,46.7" fill="url(#po)"/><polygon points="52.6,39.9 56.0,39.9 56.0,46.7 52.6,46.7" fill="url(#po)"/><polygon points="63.7,54.3 65.4,54.3 65.4,67.9 63.7,67.9" fill="url(#po)"/><polygon points="64.5,74.7 69.6,74.7 69.6,84.9 64.5,84.9" fill="url(#po)"/><polygon points="35.7,83.2 39.9,83.2 39.9,91.7 35.7,91.7" fill="url(#po)"/><polygon points="31.4,8.5 40.7,4.2 49.2,5.1 49.2,13.6 44.1,16.1 40.7,20.4 35.7,21.2 33.1,17.0" fill="url(#pg)"/><polygon points="52.6,22.1 57.7,22.1 59.4,27.2 54.3,28.9" fill="url(#pg)"/><polygon points="71.3,6.8 81.5,13.6 91.7,25.5 96.8,37.4 98.5,49.2 92.5,54.3 88.3,49.2 84.9,41.6 79.8,36.5 74.7,30.6 67.9,32.3 62.8,38.2 62.0,33.1 67.9,23.8 71.3,17.0" fill="url(#pg)"/><polygon points="1.7,45.8 10.2,44.1 17.0,45.0 20.4,49.2 21.2,61.1 17.0,63.7 8.5,62.8 3.4,56.0" fill="url(#pg)"/><polygon points="62.8,69.6 64.5,69.6 64.5,81.5 62.8,81.5" fill="url(#pg)"/><polygon points="21.2,50.9 35.7,50.1 37.4,56.0 42.4,60.3 50.9,63.7 57.7,59.4 59.4,52.6 56.0,50.9 64.5,50.9 78.1,50.9 79.8,57.7 74.7,58.6 67.9,56.0 64.5,59.4 59.4,67.9 57.7,76.4 50.9,78.9 40.7,78.9 34.0,79.8 28.9,84.9 22.1,86.6 13.6,81.5 8.5,71.3 18.7,67.9 22.1,59.4" fill="url(#pm)"/><polygon points="74.7,67.9 81.5,66.2 84.9,74.7 79.8,79.8 74.7,76.4" fill="url(#pm)"/><polygon points="25.5,52.6 34.8,51.8 36.5,57.7 42.4,62.8 50.9,65.4 50.9,74.7 42.4,77.2 34.0,74.7 28.9,67.9 23.8,59.4" fill="#000" stroke="#000" stroke-width="1.6"/><polygon points="11.9,73.0 22.1,67.9 28.9,71.3 34.0,78.1 30.6,83.2 23.8,84.9 17.0,81.5" fill="#000" stroke="#000" stroke-width="1.6"/></g><rect x="49" y="3" width="2" height="2" fill="#402000"/><rect x="49" y="95" width="2" height="2" fill="#402000"/><rect x="3" y="49" width="2" height="2" fill="#402000"/></svg><svg style="left:12px;top:356px" width="100" height="100" viewBox="0 0 100 100" fill="none" stroke="#008a8c" stroke-width="1" shape-rendering="crispEdges"><circle cx="50.4" cy="50.4" r="15"/><circle cx="50.4" cy="50.4" r="30"/><circle cx="50.4" cy="50.4" r="45.3"/><path d="M50.5 4V96M4 50.5H96" shape-rendering="crispEdges"/></svg><svg style="left:113px;top:356px" width="100" height="100" viewBox="0 0 100 100" shape-rendering="crispEdges"><clipPath id="tc6"><circle cx="49.6" cy="50.4" r="45.3"/></clipPath><g clip-path="url(#tc6)"><rect width="100" height="100" fill="url(#po)"/><polygon points="13.6,38.2 20.4,34.8 25.5,35.7 27.2,39.0 34.0,39.9 40.7,42.4 49.2,40.7 52.6,38.2 56.0,39.9 57.7,44.1 50.9,46.7 40.7,46.7 34.0,45.8 13.6,45.8" fill="url(#pg)"/><polygon points="52.6,17.8 62.8,16.1 73.0,13.6 81.5,20.4 91.7,28.9 96.8,37.4 96.8,50.9 95.9,67.9 88.3,71.3 84.9,61.1 79.8,54.3 79.8,49.2 84.9,47.5 84.9,39.0 79.8,34.0 79.8,28.9 74.7,23.8 67.9,20.4 62.8,22.1 54.3,20.4" fill="url(#pg)"/><polygon points="67.9,81.5 81.5,76.4 76.4,88.3 69.6,88.3" fill="url(#pg)"/><polygon points="9.3,23.8 18.7,15.3 25.5,18.7 23.8,23.8 18.7,28.9 11.9,32.3" fill="url(#pr)" stroke="url(#pr)" stroke-width="1.6"/><polygon points="40.7,3.4 49.2,3.4 49.2,10.2 45.8,15.3 39.0,18.7 37.4,13.6" fill="url(#pr)" stroke="url(#pr)" stroke-width="1.6"/><polygon points="52.6,10.2 61.1,6.8 69.6,9.3 62.8,13.6 54.3,15.3" fill="url(#pr)" stroke="url(#pr)" stroke-width="1.6"/><polygon points="69.6,23.8 74.7,25.5 74.7,28.9 69.6,28.0" fill="url(#pr)" stroke="url(#pr)" stroke-width="1.6"/><polygon points="62.8,34.0 66.2,34.0 66.2,38.2 62.8,38.2" fill="url(#pr)" stroke="url(#pr)" stroke-width="1.6"/><polygon points="1.7,50.9 34.0,50.9 40.7,54.3 49.2,56.9 57.7,56.0 64.5,51.8 74.7,49.2 78.1,50.9 77.2,57.7 73.0,64.5 79.8,59.4 88.3,56.0 88.3,62.8 81.5,67.9 71.3,74.7 62.8,76.4 56.0,79.8 50.9,79.8 49.2,95.9 40.7,95.9 30.6,91.7 18.7,83.2 8.5,71.3 1.7,57.7" fill="url(#pr)" stroke="url(#pr)" stroke-width="1.6"/><polygon points="1.7,52.6 34.0,52.6 40.7,57.7 49.2,59.4 57.7,58.6 64.5,54.3 74.7,51.8 74.7,57.7 71.3,62.8 66.2,67.9 59.4,71.3 50.9,73.0 49.2,79.8 42.4,83.2 34.0,88.3 25.5,84.9 15.3,76.4 6.8,67.9 1.7,57.7" fill="#000" stroke="#000" stroke-width="1.6"/></g><rect x="49" y="3" width="2" height="2" fill="#402000"/><rect x="49" y="95" width="2" height="2" fill="#402000"/><rect x="3" y="49" width="2" height="2" fill="#402000"/></svg><svg style="left:113px;top:356px" width="100" height="100" viewBox="0 0 100 100" fill="none" stroke="#008a8c" stroke-width="1" shape-rendering="crispEdges"><circle cx="49.6" cy="50.4" r="15"/><circle cx="49.6" cy="50.4" r="30"/><circle cx="49.6" cy="50.4" r="45.3"/><path d="M49.5 4V96M4 50.5H96" shape-rendering="crispEdges"/></svg><svg style="left:12px;top:456px" width="100" height="100" viewBox="0 0 100 100" shape-rendering="crispEdges"><clipPath id="tc7"><circle cx="50.4" cy="50.4" r="45.3"/></clipPath><g clip-path="url(#tc7)"><rect width="100" height="100" fill="url(#po)"/><polygon points="35.7,10.2 40.7,4.2 54.3,4.2 54.3,10.2 50.9,11.9 50.9,22.1 45.8,22.9 44.1,28.0 38.2,27.2 36.5,22.1 34.0,17.0" fill="url(#pg)"/><polygon points="63.7,13.6 71.3,12.7 74.7,17.0 81.5,18.7 90.0,25.5 96.8,34.0 88.3,34.8 81.5,32.3 74.7,28.9 71.3,23.8 64.5,20.4" fill="url(#pg)"/><polygon points="40.7,42.4 49.2,40.7 50.1,47.5 40.7,48.4" fill="url(#pg)"/><polygon points="90.0,50.9 96.8,50.9 95.9,56.0 90.0,56.0" fill="url(#pg)"/><polygon points="4.2,45.0 10.2,45.0 10.2,47.5 4.2,47.5" fill="url(#pg)"/><polygon points="3.4,49.2 5.1,34.0 13.6,22.1 23.8,15.3 30.6,20.4 34.0,30.6 42.4,34.0 42.4,44.1 36.5,50.9 3.4,50.9" fill="url(#pr)" stroke="url(#pr)" stroke-width="1.6"/><polygon points="3.4,49.2 5.1,34.0 13.6,23.8 22.1,22.1 23.8,28.9 20.4,37.4 17.0,45.8 13.6,50.1" fill="url(#pm)"/><polygon points="5.1,43.3 10.2,42.4 12.7,46.7 6.8,48.4" fill="url(#po)"/><polygon points="52.6,28.9 57.7,23.8 61.1,28.9 59.4,34.0 53.5,34.0" fill="url(#pr)" stroke="url(#pr)" stroke-width="1.6"/><polygon points="54.3,15.3 56.9,15.3 56.9,20.4 54.3,20.4" fill="url(#pr)" stroke="url(#pr)" stroke-width="1.6"/><polygon points="79.8,42.4 86.6,40.7 88.3,47.5 81.5,50.9 76.4,47.5" fill="url(#pr)" stroke="url(#pr)" stroke-width="1.6"/><polygon points="64.5,56.0 74.7,52.6 79.8,57.7 88.3,61.1 97.6,62.8 91.7,76.4 83.2,83.2 81.5,71.3 74.7,64.5 67.9,62.8" fill="url(#pr)" stroke="url(#pr)" stroke-width="1.6"/><polygon points="52.6,50.9 64.5,50.9 64.5,56.0 57.7,57.7 52.6,56.0" fill="url(#pr)" stroke="url(#pr)" stroke-width="1.6"/><polygon points="1.7,50.9 52.6,50.9 53.5,56.0 59.4,58.6 64.5,57.7 67.9,63.7 74.7,65.4 81.5,72.2 83.2,83.2 74.7,91.7 64.5,95.9 50.9,97.6 37.4,95.9 23.8,90.0 11.9,78.1 5.1,66.2 1.7,57.7" fill="#000" stroke="#000" stroke-width="1.6"/><polygon points="32.3,86.6 39.0,86.6 40.7,90.8 34.0,90.8" fill="url(#pr)" stroke="url(#pr)" stroke-width="1.6"/><polygon points="52.6,81.5 56.9,81.5 56.9,84.0 52.6,84.0" fill="url(#pr)" stroke="url(#pr)" stroke-width="1.6"/><polygon points="62.0,69.6 65.4,69.6 65.4,73.0 62.0,73.0" fill="url(#pr)" stroke="url(#pr)" stroke-width="1.6"/></g><rect x="49" y="3" width="2" height="2" fill="#402000"/><rect x="49" y="95" width="2" height="2" fill="#402000"/><rect x="3" y="49" width="2" height="2" fill="#402000"/></svg><svg style="left:12px;top:456px" width="100" height="100" viewBox="0 0 100 100" fill="none" stroke="#008a8c" stroke-width="1" shape-rendering="crispEdges"><circle cx="50.4" cy="50.4" r="15"/><circle cx="50.4" cy="50.4" r="30"/><circle cx="50.4" cy="50.4" r="45.3"/><path d="M50.5 4V96M4 50.5H96" shape-rendering="crispEdges"/></svg><svg style="left:113px;top:456px" width="100" height="100" viewBox="0 0 100 100" shape-rendering="crispEdges"><clipPath id="tc8"><circle cx="49.6" cy="50.4" r="45.3"/></clipPath><g clip-path="url(#tc8)"><rect width="100" height="100" fill="url(#po)"/><polygon points="25.5,27.2 30.6,24.6 35.7,27.2 35.7,32.3 28.9,32.3" fill="url(#pg)"/><polygon points="17.0,39.0 25.5,38.2 25.5,45.8 17.8,45.8" fill="url(#pg)"/><polygon points="52.6,28.9 55.2,28.9 55.2,36.5 57.7,39.0 58.6,45.8 54.3,49.2 50.1,49.2 50.1,40.7 52.6,37.4" fill="url(#pg)"/><polygon points="77.2,34.0 83.2,30.6 88.3,34.0 87.4,45.8 81.5,46.7 77.2,40.7" fill="url(#pg)"/><polygon points="45.0,16.1 49.2,16.1 49.2,18.7 45.0,18.7" fill="url(#pg)"/><polygon points="80.6,70.5 84.0,70.5 84.0,73.9 80.6,73.9" fill="url(#pg)"/><polygon points="22.1,15.3 28.9,10.2 37.4,11.9 41.6,17.0 39.0,21.2 44.1,23.8 48.4,27.2 46.7,31.4 42.4,30.6 39.0,25.5 30.6,21.2 23.8,19.5" fill="url(#pr)" stroke="url(#pr)" stroke-width="1.6"/><polygon points="70.5,25.5 74.7,24.6 75.6,28.9 71.3,29.7" fill="url(#pr)" stroke="url(#pr)" stroke-width="1.6"/><polygon points="1.7,40.7 10.2,39.0 15.3,45.8 17.0,50.9 1.7,50.9" fill="url(#pr)" stroke="url(#pr)" stroke-width="1.6"/><polygon points="59.4,34.0 66.2,32.3 67.9,37.4 62.8,39.9 58.6,38.2" fill="url(#pr)" stroke="url(#pr)" stroke-width="1.6"/><polygon points="50.9,79.8 59.4,74.7 67.9,67.9 74.7,62.8 79.8,56.0 81.5,61.1 76.4,67.9 71.3,74.7 67.9,81.5 66.2,91.7 59.4,95.9 50.9,96.8" fill="url(#pr)" stroke="url(#pr)" stroke-width="1.6"/><polygon points="34.0,48.4 40.7,47.5 42.4,50.9 34.0,50.9" fill="url(#pr)" stroke="url(#pr)" stroke-width="1.6"/><polygon points="56.0,45.8 62.8,44.1 62.8,50.9 56.0,50.9" fill="url(#pr)" stroke="url(#pr)" stroke-width="1.6"/><polygon points="86.6,61.1 90.0,60.3 90.0,64.5 86.6,64.5" fill="url(#pr)" stroke="url(#pr)" stroke-width="1.6"/><polygon points="1.7,50.9 17.0,50.9 34.0,50.9 50.9,54.3 56.0,50.9 62.8,50.9 63.7,40.7 67.9,38.2 74.7,41.6 78.1,47.5 78.1,54.3 74.7,61.1 67.9,67.1 59.4,73.0 50.9,78.9 50.1,96.8 37.4,95.9 23.8,90.0 11.9,78.1 5.1,66.2 1.7,57.7" fill="#000" stroke="#000" stroke-width="1.6"/><polygon points="4.2,45.8 10.2,45.0 11.9,50.9 4.2,50.9" fill="#000" stroke="#000" stroke-width="1.6"/></g><rect x="49" y="3" width="2" height="2" fill="#402000"/><rect x="49" y="95" width="2" height="2" fill="#402000"/><rect x="3" y="49" width="2" height="2" fill="#402000"/></svg><svg style="left:113px;top:456px" width="100" height="100" viewBox="0 0 100 100" fill="none" stroke="#008a8c" stroke-width="1" shape-rendering="crispEdges"><circle cx="49.6" cy="50.4" r="15"/><circle cx="49.6" cy="50.4" r="30"/><circle cx="49.6" cy="50.4" r="45.3"/><path d="M49.5 4V96M4 50.5H96" shape-rendering="crispEdges"/></svg>
<svg style="left:8.0px;top:5.5px" width="17" height="19" viewBox="0 0 17 19" ><circle cx="8.500" cy="7.500" r="6" fill="#ffff00" stroke="#000" stroke-width="1.2"/><path d="M8.500 3.500l4 4-4 4-4-4z" fill="#ff0000" stroke="#000" stroke-width="0.800"/><path d="M8.500 1.500v12M2.500 7.500h12" stroke="#000" stroke-width="0.900"/><path d="M4.500 13.500v3.500h8v-3.500" fill="#a8e4f8" stroke="#000" stroke-width="1.100"/></svg>
<svg style="left:12.0px;top:97.5px" width="17" height="19" viewBox="0 0 17 19" ><circle cx="8.500" cy="7.500" r="6" fill="#ffff00" stroke="#000" stroke-width="1.2"/><path d="M8.500 3.500l4 4-4 4-4-4z" fill="#ff0000" stroke="#000" stroke-width="0.800"/><path d="M8.500 1.500v12M2.500 7.500h12" stroke="#000" stroke-width="0.900"/><path d="M4.500 13.500v3.500h8v-3.500" fill="#a8e4f8" stroke="#000" stroke-width="1.100"/></svg>
<svg style="left:246.0px;top:97.5px" width="17" height="19" viewBox="0 0 17 19" ><circle cx="8.500" cy="7.500" r="6" fill="#ffff00" stroke="#000" stroke-width="1.2"/><path d="M8.500 3.500l4 4-4 4-4-4z" fill="#ff0000" stroke="#000" stroke-width="0.800"/><path d="M8.500 1.500v12M2.500 7.500h12" stroke="#000" stroke-width="0.900"/><path d="M4.500 13.500v3.500h8v-3.500" fill="#a8e4f8" stroke="#000" stroke-width="1.100"/></svg>
<svg style="left:12px;top:61px" width="17" height="19" viewBox="0 0 17 19" ><circle cx="8.500" cy="8" r="6.500" fill="#000"/><rect x="11.5" y="8.6" width="2" height="2" fill="#ffff00"/><rect x="9.1" y="11.0" width="2" height="2" fill="#ffff00"/><rect x="5.9" y="11.0" width="2" height="2" fill="#ffff00"/><rect x="3.5" y="8.6" width="2" height="2" fill="#ffff00"/><rect x="3.5" y="5.4" width="2" height="2" fill="#ffff00"/><rect x="5.9" y="3.0" width="2" height="2" fill="#ffff00"/><rect x="9.1" y="3.0" width="2" height="2" fill="#ffff00"/><rect x="11.5" y="5.4" width="2" height="2" fill="#ffff00"/><rect x="7.500" y="7" width="2" height="2" fill="#ffff00"/><rect x="5" y="14" width="7" height="4" fill="#000"/><rect x="6" y="15" width="5" height="2" fill="#009898"/><path d="M1 1l15 16M16 1l-15 16" stroke="#ff0000" stroke-width="1.400"/></svg>
<svg style="left:43px;top:65px" width="12" height="14" viewBox="0 0 12 14" ><path d="M0.500 0.500h7l3.500 3.500v9h-10.500z" fill="#c4c4c4" stroke="#a0a0a0"/><path d="M7.500 0.500v3.500h3.500" fill="#a0a0a0" stroke="#a0a0a0"/></svg>
<svg style="left:69px;top:69px" width="16" height="10" viewBox="0 0 16 10" ><path d="M0.500 0.500h3.500l1 1.500h5v2.500h-5l-3 3.500h-1.500z" fill="#ffff80" stroke="#000"/><path d="M4.500 4.500h10l-4 4.500h-9.500z" fill="#808000" stroke="#000"/></svg>
<svg style="left:76px;top:65px" width="10" height="6" viewBox="0 0 10 6" ><path d="M1 3.500q3.500-4 7 0.500" fill="none" stroke="#000" stroke-width="1.100"/><path d="M5.500 4.500h3.500v-3z" fill="#000"/></svg>
<span style="left:93.500px;top:57px;font:11px 'Liberation Sans',sans-serif;line-height:13px;color:#000;letter-spacing:0px">Last</span>
<svg style="left:97px;top:70px" width="16" height="10" viewBox="0 0 16 10" ><path d="M0.500 0.500h3.500l1 1.500h5v2.500h-5l-3 3.500h-1.500z" fill="#20ff20" stroke="#000"/><path d="M4.500 4.500h10l-4 4.500h-9.500z" fill="#008000" stroke="#000"/></svg>
<span style="left:123px;top:57px;font:11px 'Liberation Sans',sans-serif;line-height:13px;color:#a0a0a0;text-shadow:1px 1px 0 #fff">Res</span>
<svg style="left:125px;top:70px" width="16" height="10" viewBox="0 0 16 10" ><path d="M0.500 0.500h3.500l1 1.500h5v2.500h-5l-3 3.500h-1.500z" fill="#d8d8d8" stroke="#a0a0a0"/><path d="M4.500 4.500h10l-4 4.500h-9.500z" fill="#f0f0f0" stroke="#a0a0a0"/></svg>
<svg style="left:150px;top:67px" width="10" height="10" viewBox="0 0 10 10" ><path d="M0 4.500h8M5 1l3.500 3.500-3.500 3.500" fill="none" stroke="#a0a0a0" stroke-width="1.500"/></svg>
<svg style="left:160px;top:65px" width="12" height="14" viewBox="0 0 12 14" ><path d="M0.500 0.500h7l3.500 3.500v9h-10.500z" fill="#c4c4c4" stroke="#a0a0a0"/><path d="M7.500 0.500v3.500h3.500" fill="#a0a0a0" stroke="#a0a0a0"/></svg>
<svg style="left:188px;top:62px" width="16" height="16" viewBox="0 0 16 16" ><circle cx="8" cy="8" r="6.700" fill="#fff" stroke="#000" stroke-width="1.200"/><text x="8" y="12" text-anchor="middle" font-family="'Liberation Sans',sans-serif" font-size="11" font-weight="bold" fill="#000">1</text></svg>
<svg style="left:212px;top:62px" width="25" height="15" viewBox="0 0 25 15" ><circle cx="7" cy="7.500" r="5.600" fill="#fff" stroke="#000" stroke-width="1.100"/><circle cx="17.500" cy="7.500" r="5.600" fill="#fff" stroke="#000" stroke-width="1.100"/><text x="7.200" y="11" text-anchor="middle" font-family="'Liberation Sans',sans-serif" font-size="9.500" font-weight="bold" fill="#ff0000">L</text><text x="17.500" y="11" text-anchor="middle" font-family="'Liberation Sans',sans-serif" font-size="9.500" font-weight="bold" fill="#0000ff">R</text></svg>
<svg style="left:245.5px;top:59px" width="16" height="22" viewBox="0 0 16 22" ><path d="M1 8.500l5.500-5" stroke="#008000" stroke-width="2"/><path d="M3.500 1h6v6z" fill="#008000"/><path d="M1 13.500l5.500 5" stroke="#ff0000" stroke-width="2"/><path d="M3.500 21h6v-6z" fill="#ff0000"/><path d="M2.500 11h8" stroke="#000" stroke-width="2.400"/><path d="M9.500 6.500l5.500 4.500-5.500 4.500z" fill="#000"/></svg>
<svg style="left:279px;top:62px" width="20" height="17" viewBox="0 0 20 17" ><rect x="1.500" y="1.500" width="5" height="14" fill="#fff" stroke="#0000ff" stroke-width="1.400"/><rect x="9" y="1.500" width="10" height="14" fill="#fff" stroke="#0000ff" stroke-width="1.400"/></svg>
<svg style="left:307px;top:62px" width="19" height="17" viewBox="0 0 19 17" ><rect x="1.500" y="1.500" width="16" height="3" fill="#fff" stroke="#0000ff" stroke-width="1.400"/><rect x="1.500" y="6.500" width="16" height="9" fill="#fff" stroke="#0000ff" stroke-width="1.400"/></svg>
<svg style="left:335px;top:61px" width="19" height="16" viewBox="0 0 19 16" ><rect x="0.500" y="0.500" width="18" height="15" fill="#fff" stroke="#0000ff" stroke-width="1.200"/><path d="M2.500 2.500l4.500 3.500M16.500 2.500l-4.500 3.500M2.500 13.500l4.500-3.500M16.500 13.500l-4.500-3.500" stroke="#ff0000" stroke-width="1.500"/><path d="M8 3.500v4h-4.500zM11 3.500v4h4.500zM8 12.500v-4h-4.500zM11 12.500v-4h4.500z" fill="#ff0000"/></svg>
<svg style="left:364px;top:63px" width="18" height="14" viewBox="0 0 18 14" shape-rendering="crispEdges"><rect x="0" y="0" width="18" height="14" fill="#000"/><rect x="1.500" y="1.500" width="15" height="11" fill="#006868"/><rect x="1.500" y="5" width="15" height="2" fill="#ff4000"/><path d="M1.500 5.500h15" stroke="#ffff00" stroke-width="1" stroke-dasharray="1 1"/><path d="M1.500 3.500h15M1.500 9.500h15" stroke="#000" stroke-width="1"/></svg>
<svg style="left:399.5px;top:60px" width="16" height="20" viewBox="0 0 16 20" ><text x="1.800" y="15.800" font-family="'Liberation Sans',sans-serif" font-size="18" font-weight="bold" fill="#303000" stroke="#303000" stroke-width="1.600" stroke-linejoin="round">?</text><text x="0.800" y="14.800" font-family="'Liberation Sans',sans-serif" font-size="18" font-weight="bold" fill="#ffff00" stroke="#303000" stroke-width="1.800" stroke-linejoin="round" paint-order="stroke">?</text><text x="0.800" y="14.800" font-family="'Liberation Sans',sans-serif" font-size="18" font-weight="bold" fill="#ffff00" stroke="#ffff00" stroke-width="0.700">?</text></svg>
<svg style="left:429px;top:61px" width="16" height="17" viewBox="0 0 16 17" ><path d="M3.500 0.500h3v2.500l1 1v12.500h-6.500v-9l2.500-4.500z" fill="#000"/><path d="M9.500 0.500h3v2.500l2.500 4.500v9h-6.500v-12.500l1-1z" fill="#000"/><rect x="6.500" y="5" width="3" height="5" fill="#000"/><rect x="2" y="9" width="1" height="7" fill="#fff"/><rect x="12" y="9" width="1" height="7" fill="#fff"/><rect x="4.500" y="1" width="1" height="2" fill="#fff"/><rect x="10.500" y="1" width="1" height="2" fill="#fff"/><rect x="3" y="6" width="1" height="2" fill="#0000c0"/><rect x="9" y="6" width="1" height="2" fill="#0000c0"/></svg>
<svg style="left:454.5px;top:59.5px" width="20" height="20" viewBox="0 0 20 20" ><circle cx="10" cy="10" r="9" fill="#00ffff" stroke="#000" stroke-width="1.600"/><ellipse cx="10" cy="10" rx="4.500" ry="9" fill="none" stroke="#000" stroke-width="1.200"/><path d="M10 1v18M1 10h18M2.500 5.500h15M2.500 14.500h15" stroke="#000" stroke-width="1.200"/></svg>
<svg style="left:482.5px;top:59.5px" width="20" height="20" viewBox="0 0 20 20" ><path d="M2.500 9.500a7.500 7.500 0 0 1 13-5" fill="none" stroke="#008000" stroke-width="3"/><path d="M12 7.500h7v-7z" fill="#008000"/><path d="M17.500 10.500a7.500 7.500 0 0 1-13 5" fill="none" stroke="#008000" stroke-width="3"/><path d="M8 12.500h-7v7z" fill="#008000"/></svg>
<svg style="left:518px;top:59px" width="20" height="13" viewBox="0 0 20 13" ><rect x="0" y="0" width="20" height="13" fill="#a0a0a0"/><circle cx="6.500" cy="5" r="3.700" fill="none" stroke="#fff" stroke-width="1.500"/><path d="M4 9.500h5.500v2.500h-5.500z" fill="#fff"/><path d="M10 5.500l5-3.500 2 1.500v4" fill="none" stroke="#fff" stroke-width="1.100"/><path d="M15 8h4v4h-1v-2h-2v2h-1z" fill="#fff"/><rect x="16.500" y="6.500" width="1" height="2" fill="#fff"/></svg>
<span style="left:518.9px;top:73.500px;font:bold 7px 'Liberation Sans',sans-serif;line-height:8px;color:#a0a0a0;letter-spacing:-0.674px;text-shadow:1px 1px 0 #fff">COM 1</span>
<svg style="left:546px;top:59px" width="20" height="13" viewBox="0 0 20 13" ><rect x="0" y="0" width="20" height="13" fill="#a0a0a0"/><circle cx="6.500" cy="5" r="3.700" fill="none" stroke="#fff" stroke-width="1.500"/><path d="M4 9.500h5.500v2.500h-5.500z" fill="#fff"/><path d="M10 5.500l5-3.500 2 1.500v4" fill="none" stroke="#fff" stroke-width="1.100"/><path d="M15 8h4v4h-1v-2h-2v2h-1z" fill="#fff"/><rect x="16.500" y="6.500" width="1" height="2" fill="#fff"/></svg>
<span style="left:546.9px;top:73.500px;font:bold 7px 'Liberation Sans',sans-serif;line-height:8px;color:#a0a0a0;letter-spacing:-0.674px;text-shadow:1px 1px 0 #fff">COM 2</span>
<svg style="left:574px;top:59px" width="20" height="13" viewBox="0 0 20 13" ><rect x="0" y="0" width="20" height="13" fill="#a0a0a0"/><circle cx="6.500" cy="5" r="3.700" fill="none" stroke="#fff" stroke-width="1.500"/><path d="M4 9.500h5.500v2.500h-5.500z" fill="#fff"/><path d="M10 5.500l5-3.500 2 1.500v4" fill="none" stroke="#fff" stroke-width="1.100"/><path d="M15 8h4v4h-1v-2h-2v2h-1z" fill="#fff"/><rect x="16.500" y="6.500" width="1" height="2" fill="#fff"/></svg>
<span style="left:574.9px;top:73.500px;font:bold 7px 'Liberation Sans',sans-serif;line-height:8px;color:#a0a0a0;letter-spacing:-0.674px;text-shadow:1px 1px 0 #fff">COM 3</span>
<svg style="left:602px;top:59px" width="20" height="13" viewBox="0 0 20 13" ><rect x="0" y="0" width="20" height="13" fill="#a0a0a0"/><circle cx="6.500" cy="5" r="3.700" fill="none" stroke="#fff" stroke-width="1.500"/><path d="M4 9.500h5.500v2.500h-5.500z" fill="#fff"/><path d="M10 5.500l5-3.500 2 1.500v4" fill="none" stroke="#fff" stroke-width="1.100"/><path d="M15 8h4v4h-1v-2h-2v2h-1z" fill="#fff"/><rect x="16.500" y="6.500" width="1" height="2" fill="#fff"/></svg>
<span style="left:602.9px;top:73.500px;font:bold 7px 'Liberation Sans',sans-serif;line-height:8px;color:#a0a0a0;letter-spacing:-0.674px;text-shadow:1px 1px 0 #fff">COM 4</span>
<svg style="left:630px;top:59px" width="20" height="13" viewBox="0 0 20 13" ><rect x="0" y="0" width="20" height="13" fill="#a0a0a0"/><circle cx="6.500" cy="5" r="3.700" fill="none" stroke="#fff" stroke-width="1.500"/><path d="M4 9.500h5.500v2.500h-5.500z" fill="#fff"/><path d="M10 5.500l5-3.500 2 1.500v4" fill="none" stroke="#fff" stroke-width="1.100"/><path d="M15 8h4v4h-1v-2h-2v2h-1z" fill="#fff"/><rect x="16.500" y="6.500" width="1" height="2" fill="#fff"/></svg>
<span style="left:631.9px;top:73.500px;font:bold 7px 'Liberation Sans',sans-serif;line-height:8px;color:#a0a0a0;letter-spacing:0.307px;text-shadow:1px 1px 0 #fff">FILE</span>
<svg style="left:658px;top:59px" width="20" height="13" viewBox="0 0 20 13" ><rect x="0" y="0" width="20" height="13" fill="#a0a0a0"/><circle cx="6.500" cy="5" r="3.700" fill="none" stroke="#fff" stroke-width="1.500"/><path d="M4 9.500h5.500v2.500h-5.500z" fill="#fff"/><path d="M10 5.500l5-3.500 2 1.500v4" fill="none" stroke="#fff" stroke-width="1.100"/><path d="M15 8h4v4h-1v-2h-2v2h-1z" fill="#fff"/><rect x="16.500" y="6.500" width="1" height="2" fill="#fff"/></svg>
<span style="left:659.9px;top:73.500px;font:bold 7px 'Liberation Sans',sans-serif;line-height:8px;color:#a0a0a0;letter-spacing:0.307px;text-shadow:1px 1px 0 #fff">FILE</span>
<div style="left:686px;top:59px;width:20px;height:20px;background:#a0a0a0;box-shadow:1px 1px 0 #fff"></div>
<svg style="left:714px;top:61px" width="22" height="17" viewBox="0 0 22 17" ><circle cx="14.500" cy="7" r="5.700" fill="#fff" stroke="#000" stroke-width="1.800"/><rect x="11" y="12.500" width="7" height="3" fill="#000"/><path d="M0 12.500h6" stroke="#ff0000" stroke-width="1.800"/><path d="M5 9l4 3.500-4 3.500z" fill="#ff0000"/></svg>
<svg style="left:757px;top:58.5px" width="24" height="23" viewBox="0 0 24 23" ><path d="M2.500 2.500l19 18.500M21.500 2.500l-19 18.500" stroke="#ff0000" stroke-width="3.200" stroke-linecap="square"/></svg>
<svg style="left:25px;top:128px" width="16" height="20" viewBox="0 0 16 20" ><text x="1.800" y="15.800" font-family="'Liberation Sans',sans-serif" font-size="18" font-weight="bold" fill="#303000" stroke="#303000" stroke-width="1.600" stroke-linejoin="round">?</text><text x="0.800" y="14.800" font-family="'Liberation Sans',sans-serif" font-size="18" font-weight="bold" fill="#ffff00" stroke="#303000" stroke-width="1.800" stroke-linejoin="round" paint-order="stroke">?</text><text x="0.800" y="14.800" font-family="'Liberation Sans',sans-serif" font-size="18" font-weight="bold" fill="#ffff00" stroke="#ffff00" stroke-width="0.700">?</text></svg>
<svg style="left:51px;top:129.5px" width="16" height="15" viewBox="0 0 16 15" ><path d="M4.500 0.500h8l-2 5h-8z" fill="#fff" stroke="#000"/><path d="M5.500 2.500h5M4.800 4h5" stroke="#000" stroke-width="0.800"/><path d="M1.500 6.500h10.500l3-3v6l-3 4.500h-10.500z" fill="#a0a0a0" stroke="#000"/><path d="M1 6.500h11l3-3" fill="none" stroke="#000" stroke-width="1.500"/><path d="M1.500 9.500h10.500v4h-10.500z" fill="#a0a0a0" stroke="#000"/><path d="M1 12.500h11" stroke="#000" stroke-width="1.500"/><rect x="7" y="10" width="3" height="1" fill="#ff0000"/></svg>
<svg style="left:75px;top:126px" width="22" height="20" viewBox="0 0 22 20" ><path d="M11 1.500l2.500 6.500h7l-5.600 4.300 2.100 6.700-6-4.200-6 4.200 2.100-6.700-5.600-4.300h7z" fill="#ffff00" stroke="#000" stroke-width="1.100" stroke-linejoin="miter"/></svg>
<svg style="left:112px;top:128px" width="18" height="18" viewBox="0 0 18 18" ><circle cx="9" cy="9" r="8.300" fill="#fff"/><text x="9" y="14" text-anchor="middle" font-family="'Liberation Serif',serif" font-size="17" font-weight="bold" fill="#000">i</text></svg>
<div style="left:141px;top:130px;width:16px;height:16px;border-radius:8px;background:#a0a0a0"></div>
<svg style="left:165.5px;top:128px" width="20" height="17" viewBox="0 0 20 17" ><text x="0" y="6.500" font-family="'Liberation Sans',sans-serif" font-size="8.500" font-weight="bold" fill="#ff0000" letter-spacing="-0.600">-5</text><circle cx="13.500" cy="4" r="1.700" fill="none" stroke="#000" stroke-width="1.100"/><circle cx="3.500" cy="13" r="1.700" fill="none" stroke="#000" stroke-width="1.100"/><text x="8" y="15.500" font-family="'Liberation Sans',sans-serif" font-size="8.500" font-weight="bold" fill="#ff0000" letter-spacing="-0.800">-12</text></svg>
<svg style="left:201px;top:128px" width="19" height="18" viewBox="0 0 19 18" ><path d="M1.500 0v15.500h16" fill="none" stroke="#000" stroke-width="1.300"/><path d="M2 2.500q2 3.500 6 4.500q5 1.500 7 4" fill="none" stroke="#a0a0a0" stroke-width="1"/><path d="M13.500 9.500q2.500 2 2.500 5" fill="none" stroke="#ff0000" stroke-width="1.800"/></svg>
<svg style="left:258px;top:128px" width="16" height="20" viewBox="0 0 16 20" ><text x="1.800" y="15.800" font-family="'Liberation Sans',sans-serif" font-size="18" font-weight="bold" fill="#303000" stroke="#303000" stroke-width="1.600" stroke-linejoin="round">?</text><text x="0.800" y="14.800" font-family="'Liberation Sans',sans-serif" font-size="18" font-weight="bold" fill="#ffff00" stroke="#303000" stroke-width="1.800" stroke-linejoin="round" paint-order="stroke">?</text><text x="0.800" y="14.800" font-family="'Liberation Sans',sans-serif" font-size="18" font-weight="bold" fill="#ffff00" stroke="#ffff00" stroke-width="0.700">?</text></svg>
<svg style="left:284.5px;top:128px" width="17" height="17" viewBox="0 0 17 17" ><circle cx="8.500" cy="8.500" r="7.600" fill="#f4f4f4" stroke="#000" stroke-width="1.300"/><path d="M1 9.500a7.600 7.600 0 0 1 13-6.300l-4 4.300q-4-1-9 2z" fill="#000"/><path d="M10.500 2.500l4 2.500-3 2.500z" fill="#a0a0a0"/><circle cx="11.500" cy="8.800" r="2" fill="#000"/><path d="M3 11q5 4 11 0" stroke="#d0d0d0" fill="none"/></svg>
<svg style="left:311.5px;top:128px" width="17" height="17" viewBox="0 0 17 17" ><defs><pattern id="dots" width="2" height="2" patternUnits="userSpaceOnUse"><rect width="2" height="2" fill="#fff"/><rect width="1" height="1" fill="#000"/></pattern></defs><circle cx="8.500" cy="8.500" r="7.600" fill="url(#dots)" stroke="#000" stroke-width="1.200"/></svg>
<svg style="left:338.5px;top:128px" width="20" height="17" viewBox="0 0 20 17" ><text x="0" y="6.500" font-family="'Liberation Sans',sans-serif" font-size="8.500" font-weight="bold" fill="#ff0000" letter-spacing="-0.600">-5</text><circle cx="13.500" cy="4" r="1.700" fill="none" stroke="#000" stroke-width="1.100"/><circle cx="3.500" cy="13" r="1.700" fill="none" stroke="#000" stroke-width="1.100"/><text x="8" y="15.500" font-family="'Liberation Sans',sans-serif" font-size="8.500" font-weight="bold" fill="#ff0000" letter-spacing="-0.800">-12</text></svg>
<div style="left:367px;top:130px;width:16px;height:16px;border-radius:8px;background:#a0a0a0"></div>
<svg style="left:392.5px;top:128.5px" width="17" height="17" viewBox="0 0 17 17" ><circle cx="8.500" cy="8.500" r="7.800" fill="#000"/><path d="M8.500 8.500L1.500 8.500A7 7 0 0 1 9.500 1.600z" fill="#0000ff"/><path d="M8.500 8.500L9.500 1.600A7 7 0 0 1 15.500 8z" fill="#ff0000"/><path d="M8.500 8.500L1.500 8.500A7 7 0 0 0 8.500 15.500z" fill="#ffff00"/><path d="M8.500 8.500L8.500 15.500A7 7 0 0 0 15.400 9.500L12 9z" fill="#80ff00"/><path d="M5 8.500l5-3.500v3.500z" fill="#ff00ff"/><path d="M1.500 8.500h9l2 1.500" stroke="#000" stroke-width="0.800" fill="none"/><path d="M11.500 2v6M8.500 5h6" stroke="#fff" stroke-width="1.500"/></svg>
<svg style="left:418px;top:129px" width="20" height="15" viewBox="0 0 20 15" shape-rendering="crispEdges"><rect x="1" y="1" width="18" height="13" fill="#fff" stroke="#000" stroke-width="1.600"/><path d="M7 1v13M13 1v13M1 7.500h18" stroke="#000" stroke-width="1"/></svg>
<svg style="left:445.5px;top:129.5px" width="18" height="15" viewBox="0 0 18 15" ><path d="M9 0L0.500 10.500Q9 17 17.500 10.500z" fill="#000"/><path d="M9 0L1.700 9Q9 13.500 16.300 9z" fill="#900000"/><path d="M9 0L3.800 6.500Q9 9 14.200 6.500z" fill="#008000"/><path d="M9 0L5 5Q9 7 13 5z" fill="#00e000"/><path d="M9 0L6.200 3.500Q9 4.800 11.800 3.500z" fill="#ffff00"/></svg>
<svg style="left:481px;top:126px" width="20" height="20" viewBox="0 0 20 20" ><circle cx="7" cy="7" r="5.300" fill="#fff" stroke="#000" stroke-width="1.700"/><path d="M11 11l7 7" stroke="#000" stroke-width="3"/></svg>
<svg style="left:507px;top:127px" width="21" height="20" viewBox="0 0 21 20" ><rect x="0" y="0" width="3" height="3" fill="#ffff00"/><rect x="0" y="3" width="3" height="3" fill="#00ff00"/><rect x="0" y="6" width="3" height="3" fill="#008000"/><rect x="0" y="9" width="3" height="3" fill="#800000"/><rect x="0" y="12" width="3" height="3" fill="#ff0000"/><rect x="0" y="15" width="3" height="3" fill="#0000ff"/><rect x="0" y="18" width="3" height="2" fill="#000"/><rect x="8" y="0" width="3" height="8" fill="#fff"/><rect x="8" y="8" width="3" height="4" fill="#a0a0a0"/><rect x="8" y="12" width="3" height="8" fill="#000"/><text x="3.500" y="5" font-family="'Liberation Sans',sans-serif" font-size="6" font-weight="bold" fill="#000">2</text><text x="3.500" y="10" font-family="'Liberation Sans',sans-serif" font-size="6" font-weight="bold" fill="#000">0</text><text x="3.500" y="15" font-family="'Liberation Sans',sans-serif" font-size="6" font-weight="bold" fill="#000">4</text><text x="3.500" y="20" font-family="'Liberation Sans',sans-serif" font-size="6" font-weight="bold" fill="#000">6</text><text x="12" y="5" font-family="'Liberation Sans',sans-serif" font-size="6" font-weight="bold" fill="#000">0</text><text x="12" y="10" font-family="'Liberation Sans',sans-serif" font-size="6" font-weight="bold" fill="#000">4</text><text x="12" y="15" font-family="'Liberation Sans',sans-serif" font-size="6" font-weight="bold" fill="#000">7</text><text x="12" y="20" font-family="'Liberation Sans',sans-serif" font-size="6" font-weight="bold" fill="#000" letter-spacing="-0.300">dB</text></svg>
<svg style="left:536px;top:129.5px" width="16" height="15" viewBox="0 0 16 15" ><path d="M4.500 0.500h8l-2 5h-8z" fill="#fff" stroke="#000"/><path d="M5.500 2.500h5M4.800 4h5" stroke="#000" stroke-width="0.800"/><path d="M1.500 6.500h10.500l3-3v6l-3 4.500h-10.500z" fill="#a0a0a0" stroke="#000"/><path d="M1 6.500h11l3-3" fill="none" stroke="#000" stroke-width="1.500"/><path d="M1.500 9.500h10.500v4h-10.500z" fill="#a0a0a0" stroke="#000"/><path d="M1 12.500h11" stroke="#000" stroke-width="1.500"/><rect x="7" y="10" width="3" height="1" fill="#ff0000"/></svg>
<svg style="left:562.5px;top:128.5px" width="18" height="18" viewBox="0 0 18 18" ><circle cx="9" cy="9" r="8.200" fill="none" stroke="#a0a0a0" stroke-width="1.100"/><path d="M9 1v16M1 9h16" stroke="#a0a0a0" stroke-width="1.100"/><path d="M7 4l2-2.500 2 2.500M7 14l2 2.500 2-2.500" fill="none" stroke="#a0a0a0" stroke-width="1.100"/></svg>
<div style="left:114px;top:258px;width:95px;height:95px;border:2px solid #ff0000"></div>
<div style="left:89px;top:237px;width:49px;height:13px;border:1px solid #000;background:#fff"></div>
<span style="left:93px;top:238px;font:normal 11px 'Liberation Sans',sans-serif;line-height:13px;color:#000;letter-spacing:-0.193px;">09-10-97</span>
<div style="left:89px;top:337px;width:49px;height:13px;border:1px solid #000;background:#fff"></div>
<span style="left:93px;top:338px;font:normal 11px 'Liberation Sans',sans-serif;line-height:13px;color:#000;letter-spacing:-0.193px;">28-01-98</span>
<div style="left:89px;top:437px;width:49px;height:13px;border:1px solid #000;background:#fff"></div>
<span style="left:93px;top:438px;font:normal 11px 'Liberation Sans',sans-serif;line-height:13px;color:#000;letter-spacing:-0.193px;">14-09-01</span>
<div style="left:89px;top:537px;width:49px;height:13px;border:1px solid #000;background:#fff"></div>
<span style="left:93px;top:538px;font:normal 11px 'Liberation Sans',sans-serif;line-height:13px;color:#000;letter-spacing:-0.193px;">21-01-05</span>
<svg style="left:190.5px;top:235px" width="20" height="20" viewBox="0 0 20 20" fill="none"><path d="M15.800 5.200A7.600 7.600 0 1 0 15.800 14.800" stroke="#909090" stroke-width="1"/></svg>
<svg style="left:190.5px;top:334px" width="20" height="20" viewBox="0 0 20 20" fill="none"><circle cx="10.3" cy="10" r="7.600" stroke="#909090" stroke-width="1"/><path d="M5 10.500h10M7 9.500l-2 1 2 1M13 9.500l2 1-2 1M10 10v3" stroke="#00a000" stroke-width="1"/></svg>
<svg style="left:190.5px;top:435px" width="20" height="20" viewBox="0 0 20 20" fill="none"><circle cx="10.3" cy="10" r="7.600" stroke="#909090" stroke-width="1"/><path d="M10.500 7v6M9.500 11l1 2" stroke="#00a000" stroke-width="1"/></svg>
<svg style="left:190.5px;top:535px" width="20" height="20" viewBox="0 0 20 20" fill="none"><circle cx="10.3" cy="10" r="7.600" stroke="#909090" stroke-width="1"/><path d="M5 11.500h10M13 9v2" stroke="#00a000" stroke-width="1.2"/></svg>
<div style="left:214px;top:156px;width:14px;height:402px;background:#f6f6f6;"></div>
<div class="sb" style="left:214px;top:157px;width:11px;height:14px"></div>
<svg style="left:217.5px;top:163px" width="7" height="4" viewBox="0 0 7 4"><path d="M0 4L3.500 0.500 7 4z" fill="#000"/></svg>
<div class="sb" style="left:214px;top:174px;width:11px;height:246px"></div>
<div class="sb" style="left:214px;top:543px;width:11px;height:14px"></div>
<svg style="left:217.5px;top:551px" width="7" height="4" viewBox="0 0 7 4"><path d="M0 0L3.500 3.500 7 0z" fill="#000"/></svg>
<span style="left:630.5px;top:366px;font:normal 11px 'Liberation Sans',sans-serif;line-height:14px;color:#000;letter-spacing:-1.455px;">MD</span>
<span style="left:669.5px;top:366px;font:normal 11px 'Liberation Sans',sans-serif;line-height:14px;color:#000;">:</span>
<span style="left:677.6px;top:366px;font:normal 11px 'Liberation Sans',sans-serif;line-height:14px;color:#000;letter-spacing:-0.167px;">-8.3 dB</span>
<span style="left:630.5px;top:380px;font:normal 11px 'Liberation Sans',sans-serif;line-height:14px;color:#000;letter-spacing:-1.142px;">PSD</span>
<span style="left:669.5px;top:380px;font:normal 11px 'Liberation Sans',sans-serif;line-height:14px;color:#000;">:</span>
<span style="left:677.6px;top:380px;font:normal 11px 'Liberation Sans',sans-serif;line-height:14px;color:#000;letter-spacing:-0.202px;">8.4 dB</span>
<span style="left:630.5px;top:394px;font:normal 11px 'Liberation Sans',sans-serif;line-height:14px;color:#000;letter-spacing:-1.141px;">CPSD</span>
<span style="left:669.5px;top:394px;font:normal 11px 'Liberation Sans',sans-serif;line-height:14px;color:#000;">:</span>
<span style="left:677.6px;top:394px;font:normal 11px 'Liberation Sans',sans-serif;line-height:14px;color:#000;letter-spacing:-0.202px;">8.1 dB</span>
<span style="left:630.5px;top:408px;font:normal 11px 'Liberation Sans',sans-serif;line-height:14px;color:#000;letter-spacing:-1.136px;">FD</span>
<span style="left:669.5px;top:408px;font:normal 11px 'Liberation Sans',sans-serif;line-height:14px;color:#000;">:</span>
<span style="left:677.6px;top:408px;font:normal 11px 'Liberation Sans',sans-serif;line-height:14px;color:#000;letter-spacing:-0.110px;">-59 %</span>
<span style="left:630.5px;top:422px;font:normal 11px 'Liberation Sans',sans-serif;line-height:14px;color:#000;letter-spacing:-1.531px;">SF</span>
<span style="left:669.5px;top:422px;font:normal 11px 'Liberation Sans',sans-serif;line-height:14px;color:#000;">:</span>
<span style="left:677.6px;top:422px;font:normal 11px 'Liberation Sans',sans-serif;line-height:14px;color:#000;letter-spacing:-0.202px;">2.5 dB</span>
<svg style="left:630px;top:168px" width="162" height="176" viewBox="0 0 162 176"><rect x="32" y="14" width="117" height="136" fill="#808080"/><rect x="28" y="16" width="4" height="1" fill="#000"/><rect x="28" y="45" width="4" height="1" fill="#000"/><rect x="28" y="75" width="4" height="1" fill="#000"/><rect x="28" y="105" width="4" height="1" fill="#000"/><rect x="28" y="135" width="4" height="1" fill="#000"/><rect x="32" y="150" width="1" height="4" fill="#000"/><rect x="56" y="150" width="1" height="4" fill="#000"/><rect x="79" y="150" width="1" height="4" fill="#000"/><rect x="103" y="150" width="1" height="4" fill="#000"/><rect x="126" y="150" width="1" height="4" fill="#000"/><rect x="149" y="150" width="1" height="4" fill="#000"/><path d="M32 47.5H149" stroke="#fff" stroke-width="1" stroke-dasharray="3 3" shape-rendering="crispEdges"/><polyline points="32.0,29.0 38.7,35.4 45.4,35.4 65.4,40.7 90.7,41.2 100.0,44.7 116.0,45.0 124.0,47.4 140.0,47.4 149.0,52.7" fill="none" stroke="#ffff00" stroke-width="1" shape-rendering="crispEdges"/><polyline points="32.0,41.2 37.4,45.2 44.0,45.2 52.0,47.4 57.4,47.4 65.4,50.0 81.4,50.6 92.0,54.0 100.0,55.4 108.0,56.7 116.0,57.2 125.4,64.7 137.0,76.5 142.0,92.5 148.6,114.6" fill="none" stroke="#ffff00" stroke-width="1" shape-rendering="crispEdges"/><polyline points="32.4,42.6 37.0,49.0 49.5,49.0 53.0,52.2 65.5,52.2 68.4,55.0 76.2,55.0 79.0,58.0 88.7,58.0 94.0,62.2 103.0,67.5 108.3,71.0 113.6,77.5 120.8,79.0 124.3,85.4 129.7,96.0 138.6,105.0 142.2,117.4 144.7,131.7 146.4,142.4 150.0,146.0" fill="none" stroke="#ff0000" stroke-width="3.2" stroke-linejoin="round"/><text x="27" y="18" text-anchor="end" font-family="'Liberation Sans',sans-serif" font-size="10" fill="#000" letter-spacing="-0.6">10</text><text x="27" y="47" text-anchor="end" font-family="'Liberation Sans',sans-serif" font-size="10" fill="#000" letter-spacing="-0.6">0</text><text x="27" y="77" text-anchor="end" font-family="'Liberation Sans',sans-serif" font-size="10" fill="#000" letter-spacing="-0.6">-10</text><text x="27" y="107" text-anchor="end" font-family="'Liberation Sans',sans-serif" font-size="10" fill="#000" letter-spacing="-0.6">-20</text><text x="27" y="137" text-anchor="end" font-family="'Liberation Sans',sans-serif" font-size="10" fill="#000" letter-spacing="-0.6">-30</text><text x="2.5" y="47" font-family="'Liberation Sans',sans-serif" font-size="10" fill="#000" letter-spacing="-0.6">[dB]</text><text x="32.5" y="165" text-anchor="middle" font-family="'Liberation Sans',sans-serif" font-size="10" fill="#000" letter-spacing="-0.6">0</text><text x="56.5" y="165" text-anchor="middle" font-family="'Liberation Sans',sans-serif" font-size="10" fill="#000" letter-spacing="-0.6">20</text><text x="80" y="165" text-anchor="middle" font-family="'Liberation Sans',sans-serif" font-size="10" fill="#000" letter-spacing="-0.6">40</text><text x="103.5" y="165" text-anchor="middle" font-family="'Liberation Sans',sans-serif" font-size="10" fill="#000" letter-spacing="-0.6">60</text><text x="127" y="165" text-anchor="middle" font-family="'Liberation Sans',sans-serif" font-size="10" fill="#000" letter-spacing="-0.6">80</text><text x="150" y="165" text-anchor="middle" font-family="'Liberation Sans',sans-serif" font-size="10" fill="#000" letter-spacing="-0.6">100</text><text x="122" y="175" font-family="'Liberation Sans',sans-serif" font-size="10" fill="#000" letter-spacing="-0.6">[%]</text></svg>
<span style="left:428px;top:192px;font:normal 20px 'Liberation Serif',serif;line-height:22px;color:#008080;letter-spacing:-0.333px;">30°</span>
<span style="left:561.5px;top:213.5px;font:bold 25px 'Liberation Sans',sans-serif;line-height:28px;color:#008080;">R</span>
<span style="left:277.5px;top:520px;font:bold 12px 'Liberation Sans',sans-serif;line-height:15px;color:#008080;letter-spacing:-0.105px;">Color Defect Map</span>
<span style="left:515.5px;top:520px;font:bold 12px 'Liberation Sans',sans-serif;line-height:15px;color:#008080;letter-spacing:-0.142px;">Total Deviation</span>
<svg style="left:530.5px;top:447px" width="56" height="56" viewBox="0 0 56 56"><circle cx="28.5" cy="28.5" r="25.5" fill="none" stroke="#808080" stroke-width="1"/><path d="M14.500 29.500l7.500-4v2.500h13v-2.500l7.500 4-7.500 4v-2.500h-2.500l-4 5-4-5h-2.500v2.500z" fill="#00a000"/></svg></body></html>
